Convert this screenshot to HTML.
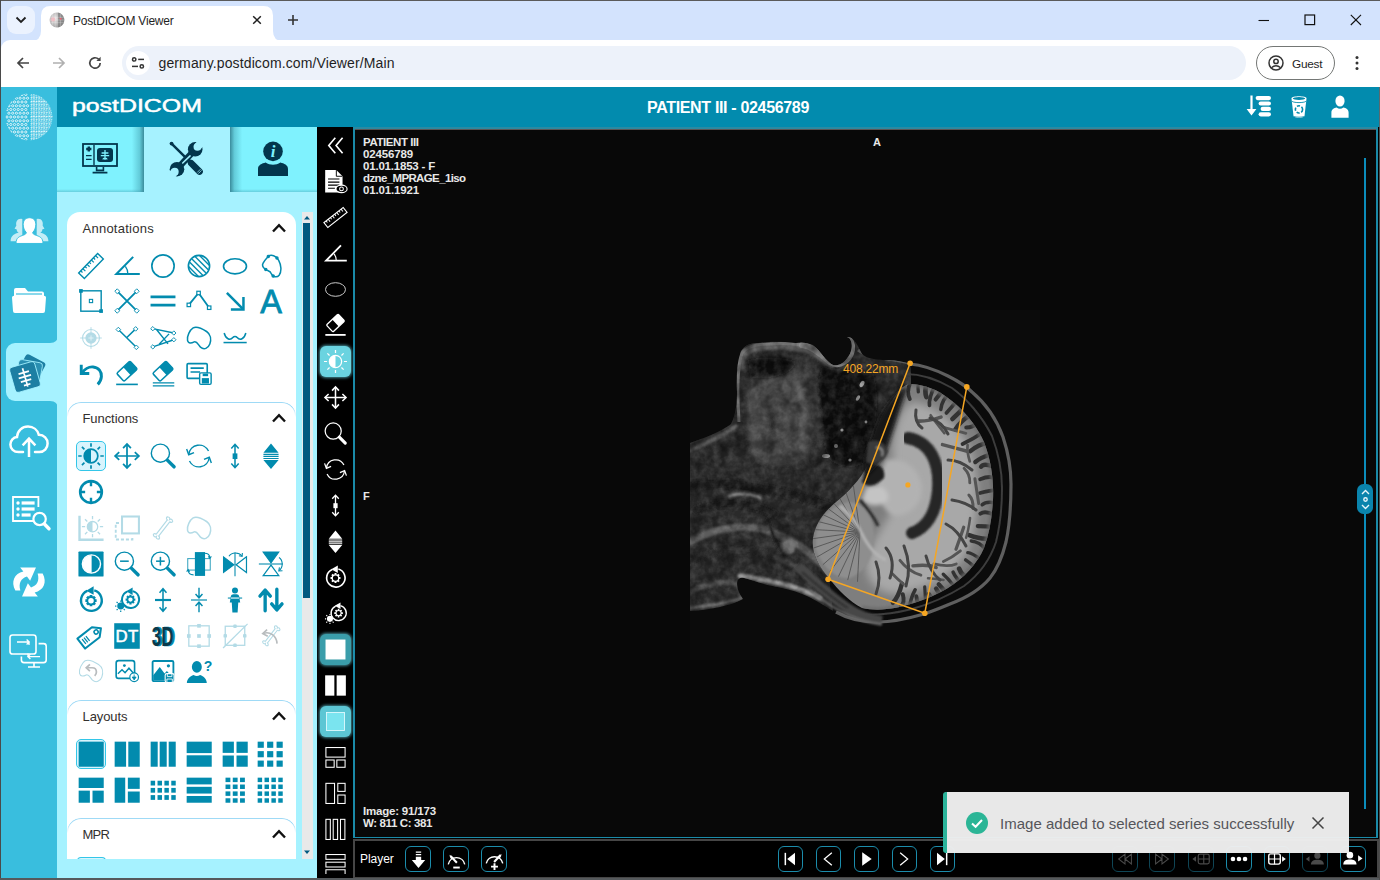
<!DOCTYPE html>
<html><head><meta charset="utf-8"><title>PostDICOM Viewer</title>
<style>
html,body{margin:0;padding:0}
body{width:1380px;height:880px;position:relative;overflow:hidden;background:#d3e3fd;font-family:"Liberation Sans",sans-serif}
body>div,body>svg{position:absolute;display:block}
.t{white-space:nowrap;line-height:1.2}
svg{overflow:visible}
</style></head><body>
<div style="left:0px;top:0px;width:1380px;height:40px;background:#d3e3fd"></div>
<div style="left:7px;top:6px;width:28px;height:28px;background:#ebf2fe;border-radius:9px"></div>
<svg style="left:15px;top:15px;" width="12" height="10" viewBox="0 0 12 10"><path d="M1.5 2.5 L6 7 L10.5 2.5" fill="none" stroke="#1f1f1f" stroke-width="1.8"/></svg>
<svg style="left:31px;top:5.5px;" width="254" height="35" viewBox="0 0 254 35"><path d="M0 35 Q10 35 10 25 L10 9.5 Q10 0 19.5 0 L232.5 0 Q242 0 242 9.5 L242 25 Q242 35 252 35 Z" fill="#fff"/></svg>
<svg style="left:49px;top:12px;" width="16" height="16" viewBox="0 0 18 18"><defs><radialGradient id="fg" cx="40%" cy="40%" r="65%"><stop offset="0" stop-color="#e6e2e2"/><stop offset="1" stop-color="#a4a4a4"/></radialGradient></defs><circle cx="9" cy="9" r="8.4" fill="url(#fg)"/><path d="M10 0.7 A8.4 8.4 0 0 1 10 17.3 Z" fill="#6a6a6a" opacity=".6"/><path d="M1 6 H17 M0.7 9 H17.3 M1 12 H17 M4 2 V16 M7 1 V17 M13 1.6 V16.4" stroke="#fff" stroke-width=".5" opacity=".5" fill="none"/><circle cx="4.6" cy="8.4" r="2.4" fill="#f6b4bc" opacity=".75"/><path d="M11.4 6.4 L14.6 7 L13.4 9.4 Z" fill="#f0566a" opacity=".9"/></svg>
<div class="t" style="left:73px;top:13.5px;font-size:12px;color:#1f1f1f;letter-spacing:-0.2px">PostDICOM Viewer</div>
<svg style="left:252px;top:15px;" width="10" height="10" viewBox="0 0 10 10"><path d="M1.2 1.2 L8.8 8.8 M8.8 1.2 L1.2 8.8" stroke="#1f1f1f" stroke-width="1.5" fill="none"/></svg>
<svg style="left:287px;top:14px;" width="12" height="12" viewBox="0 0 12 12"><path d="M6 1 V11 M1 6 H11" stroke="#333" stroke-width="1.6" fill="none"/></svg>
<svg style="left:1258px;top:14px;" width="12" height="12" viewBox="0 0 12 12"><path d="M0.5 6.5 H11" stroke="#111" stroke-width="1.1"/></svg>
<svg style="left:1304px;top:14px;" width="12" height="12" viewBox="0 0 12 12"><rect x="1" y="1" width="9.6" height="9.6" fill="none" stroke="#111" stroke-width="1.2"/></svg>
<svg style="left:1350px;top:14px;" width="12" height="12" viewBox="0 0 12 12"><path d="M0.8 0.8 L11 11 M11 0.8 L0.8 11" stroke="#111" stroke-width="1.1"/></svg>
<div style="left:1px;top:40px;width:1379px;height:47px;background:#fff;border-radius:9px 0 0 0"></div>
<svg style="left:15px;top:55px;" width="16" height="16" viewBox="0 0 16 16"><path d="M14 8 H3 M8 3 L3 8 L8 13" fill="none" stroke="#444" stroke-width="1.7"/></svg>
<svg style="left:51px;top:55px;" width="16" height="16" viewBox="0 0 16 16"><path d="M2 8 H13 M8 3 L13 8 L8 13" fill="none" stroke="#b0b0b0" stroke-width="1.7"/></svg>
<svg style="left:87px;top:55px;" width="16" height="16" viewBox="0 0 16 16"><path d="M13.2 8 A5.2 5.2 0 1 1 11.6 4.2" fill="none" stroke="#444" stroke-width="1.7"/><path d="M13.6 1.8 V6 H9.4 Z" fill="#444"/></svg>
<div style="left:122px;top:46px;width:1124px;height:34px;background:#edf2fa;border-radius:17px"></div>
<div style="left:126px;top:51px;width:24px;height:24px;background:#fff;border-radius:12px"></div>
<svg style="left:131px;top:56px;" width="14" height="14" viewBox="0 0 14 14"><g fill="none" stroke="#333" stroke-width="1.5"><circle cx="3.2" cy="3.4" r="1.7"/><path d="M7.2 3.4 H13"/><path d="M1 10.4 H7"/><circle cx="10.8" cy="10.4" r="1.7"/></g></svg>
<div class="t" style="left:158.5px;top:55px;font-size:14px;color:#1f1f1f;letter-spacing:0.12px">germany.postdicom.com/Viewer/Main</div>
<div style="left:1256px;top:46px;width:79px;height:34px;border:1px solid #747775;border-radius:17px;box-sizing:border-box"></div>
<svg style="left:1268px;top:55px;" width="16" height="16" viewBox="0 0 16 16"><g fill="none" stroke="#333" stroke-width="1.5"><circle cx="8" cy="8" r="7"/><circle cx="8" cy="6.4" r="2.2"/><path d="M3.4 12.8 Q8 8.6 12.6 12.8"/></g></svg>
<div class="t" style="left:1292px;top:56.5px;font-size:11.8px;color:#1f1f1f;letter-spacing:-0.25px">Guest</div>
<svg style="left:1354px;top:55px;" width="6" height="16" viewBox="0 0 6 16"><circle cx="3" cy="2.5" r="1.5" fill="#333"/><circle cx="3" cy="8" r="1.5" fill="#333"/><circle cx="3" cy="13.5" r="1.5" fill="#333"/></svg>
<div style="left:1px;top:87px;width:1379px;height:40px;background:#028bae"></div>
<div style="left:1px;top:87px;width:56px;height:792px;background:#39bede"></div>
<svg style="left:4px;top:90px;" width="50" height="52" viewBox="0 0 50 52"><defs><clipPath id="lgc"><circle cx="25" cy="27" r="23.5"/></clipPath></defs><g clip-path="url(#lgc)"><circle cx="3.0" cy="4.5" r="1.1" fill="none" stroke="#fff" stroke-width=".8"/><circle cx="6.8" cy="4.5" r="1.1" fill="none" stroke="#fff" stroke-width=".8"/><circle cx="10.5" cy="4.5" r="1.1" fill="none" stroke="#fff" stroke-width=".8"/><circle cx="14.2" cy="4.5" r="1.1" fill="none" stroke="#fff" stroke-width=".8"/><circle cx="18.0" cy="4.5" r="1.1" fill="none" stroke="#fff" stroke-width=".8"/><circle cx="21.8" cy="4.5" r="1.1" fill="none" stroke="#fff" stroke-width=".8"/><circle cx="4.9" cy="8.2" r="1.1" fill="none" stroke="#fff" stroke-width=".8"/><circle cx="8.7" cy="8.2" r="1.1" fill="none" stroke="#fff" stroke-width=".8"/><circle cx="12.4" cy="8.2" r="1.1" fill="none" stroke="#fff" stroke-width=".8"/><circle cx="16.1" cy="8.2" r="1.1" fill="none" stroke="#fff" stroke-width=".8"/><circle cx="19.9" cy="8.2" r="1.1" fill="none" stroke="#fff" stroke-width=".8"/><circle cx="23.6" cy="8.2" r="1.1" fill="none" stroke="#fff" stroke-width=".8"/><circle cx="3.0" cy="12.0" r="1.1" fill="none" stroke="#fff" stroke-width=".8"/><circle cx="6.8" cy="12.0" r="1.1" fill="none" stroke="#fff" stroke-width=".8"/><circle cx="10.5" cy="12.0" r="1.1" fill="none" stroke="#fff" stroke-width=".8"/><circle cx="14.2" cy="12.0" r="1.1" fill="none" stroke="#fff" stroke-width=".8"/><circle cx="18.0" cy="12.0" r="1.1" fill="none" stroke="#fff" stroke-width=".8"/><circle cx="21.8" cy="12.0" r="1.1" fill="none" stroke="#fff" stroke-width=".8"/><circle cx="4.9" cy="15.8" r="1.1" fill="none" stroke="#fff" stroke-width=".8"/><circle cx="8.7" cy="15.8" r="1.1" fill="none" stroke="#fff" stroke-width=".8"/><circle cx="12.4" cy="15.8" r="1.1" fill="none" stroke="#fff" stroke-width=".8"/><circle cx="16.1" cy="15.8" r="1.1" fill="none" stroke="#fff" stroke-width=".8"/><circle cx="19.9" cy="15.8" r="1.1" fill="none" stroke="#fff" stroke-width=".8"/><circle cx="23.6" cy="15.8" r="1.1" fill="none" stroke="#fff" stroke-width=".8"/><circle cx="3.0" cy="19.5" r="1.1" fill="none" stroke="#fff" stroke-width=".8"/><circle cx="6.8" cy="19.5" r="1.1" fill="none" stroke="#fff" stroke-width=".8"/><circle cx="10.5" cy="19.5" r="1.1" fill="none" stroke="#fff" stroke-width=".8"/><circle cx="14.2" cy="19.5" r="1.1" fill="none" stroke="#fff" stroke-width=".8"/><circle cx="18.0" cy="19.5" r="1.1" fill="none" stroke="#fff" stroke-width=".8"/><circle cx="21.8" cy="19.5" r="1.1" fill="none" stroke="#fff" stroke-width=".8"/><circle cx="4.9" cy="23.2" r="1.1" fill="none" stroke="#fff" stroke-width=".8"/><circle cx="8.7" cy="23.2" r="1.1" fill="none" stroke="#fff" stroke-width=".8"/><circle cx="12.4" cy="23.2" r="1.1" fill="none" stroke="#fff" stroke-width=".8"/><circle cx="16.1" cy="23.2" r="1.1" fill="none" stroke="#fff" stroke-width=".8"/><circle cx="19.9" cy="23.2" r="1.1" fill="none" stroke="#fff" stroke-width=".8"/><circle cx="23.6" cy="23.2" r="1.1" fill="none" stroke="#fff" stroke-width=".8"/><circle cx="3.0" cy="27.0" r="1.1" fill="none" stroke="#fff" stroke-width=".8"/><circle cx="6.8" cy="27.0" r="1.1" fill="none" stroke="#fff" stroke-width=".8"/><circle cx="10.5" cy="27.0" r="1.1" fill="none" stroke="#fff" stroke-width=".8"/><circle cx="14.2" cy="27.0" r="1.1" fill="none" stroke="#fff" stroke-width=".8"/><circle cx="18.0" cy="27.0" r="1.1" fill="none" stroke="#fff" stroke-width=".8"/><circle cx="21.8" cy="27.0" r="1.1" fill="none" stroke="#fff" stroke-width=".8"/><circle cx="4.9" cy="30.8" r="1.1" fill="none" stroke="#fff" stroke-width=".8"/><circle cx="8.7" cy="30.8" r="1.1" fill="none" stroke="#fff" stroke-width=".8"/><circle cx="12.4" cy="30.8" r="1.1" fill="none" stroke="#fff" stroke-width=".8"/><circle cx="16.1" cy="30.8" r="1.1" fill="none" stroke="#fff" stroke-width=".8"/><circle cx="19.9" cy="30.8" r="1.1" fill="none" stroke="#fff" stroke-width=".8"/><circle cx="23.6" cy="30.8" r="1.1" fill="none" stroke="#fff" stroke-width=".8"/><circle cx="3.0" cy="34.5" r="1.1" fill="none" stroke="#fff" stroke-width=".8"/><circle cx="6.8" cy="34.5" r="1.1" fill="none" stroke="#fff" stroke-width=".8"/><circle cx="10.5" cy="34.5" r="1.1" fill="none" stroke="#fff" stroke-width=".8"/><circle cx="14.2" cy="34.5" r="1.1" fill="none" stroke="#fff" stroke-width=".8"/><circle cx="18.0" cy="34.5" r="1.1" fill="none" stroke="#fff" stroke-width=".8"/><circle cx="21.8" cy="34.5" r="1.1" fill="none" stroke="#fff" stroke-width=".8"/><circle cx="4.9" cy="38.2" r="1.1" fill="none" stroke="#fff" stroke-width=".8"/><circle cx="8.7" cy="38.2" r="1.1" fill="none" stroke="#fff" stroke-width=".8"/><circle cx="12.4" cy="38.2" r="1.1" fill="none" stroke="#fff" stroke-width=".8"/><circle cx="16.1" cy="38.2" r="1.1" fill="none" stroke="#fff" stroke-width=".8"/><circle cx="19.9" cy="38.2" r="1.1" fill="none" stroke="#fff" stroke-width=".8"/><circle cx="23.6" cy="38.2" r="1.1" fill="none" stroke="#fff" stroke-width=".8"/><circle cx="3.0" cy="42.0" r="1.1" fill="none" stroke="#fff" stroke-width=".8"/><circle cx="6.8" cy="42.0" r="1.1" fill="none" stroke="#fff" stroke-width=".8"/><circle cx="10.5" cy="42.0" r="1.1" fill="none" stroke="#fff" stroke-width=".8"/><circle cx="14.2" cy="42.0" r="1.1" fill="none" stroke="#fff" stroke-width=".8"/><circle cx="18.0" cy="42.0" r="1.1" fill="none" stroke="#fff" stroke-width=".8"/><circle cx="21.8" cy="42.0" r="1.1" fill="none" stroke="#fff" stroke-width=".8"/><circle cx="4.9" cy="45.8" r="1.1" fill="none" stroke="#fff" stroke-width=".8"/><circle cx="8.7" cy="45.8" r="1.1" fill="none" stroke="#fff" stroke-width=".8"/><circle cx="12.4" cy="45.8" r="1.1" fill="none" stroke="#fff" stroke-width=".8"/><circle cx="16.1" cy="45.8" r="1.1" fill="none" stroke="#fff" stroke-width=".8"/><circle cx="19.9" cy="45.8" r="1.1" fill="none" stroke="#fff" stroke-width=".8"/><circle cx="23.6" cy="45.8" r="1.1" fill="none" stroke="#fff" stroke-width=".8"/><circle cx="3.0" cy="49.5" r="1.1" fill="none" stroke="#fff" stroke-width=".8"/><circle cx="6.8" cy="49.5" r="1.1" fill="none" stroke="#fff" stroke-width=".8"/><circle cx="10.5" cy="49.5" r="1.1" fill="none" stroke="#fff" stroke-width=".8"/><circle cx="14.2" cy="49.5" r="1.1" fill="none" stroke="#fff" stroke-width=".8"/><circle cx="18.0" cy="49.5" r="1.1" fill="none" stroke="#fff" stroke-width=".8"/><circle cx="21.8" cy="49.5" r="1.1" fill="none" stroke="#fff" stroke-width=".8"/><circle cx="4.9" cy="53.2" r="1.1" fill="none" stroke="#fff" stroke-width=".8"/><circle cx="8.7" cy="53.2" r="1.1" fill="none" stroke="#fff" stroke-width=".8"/><circle cx="12.4" cy="53.2" r="1.1" fill="none" stroke="#fff" stroke-width=".8"/><circle cx="16.1" cy="53.2" r="1.1" fill="none" stroke="#fff" stroke-width=".8"/><circle cx="19.9" cy="53.2" r="1.1" fill="none" stroke="#fff" stroke-width=".8"/><circle cx="23.6" cy="53.2" r="1.1" fill="none" stroke="#fff" stroke-width=".8"/><text x="26" y="7.8" font-family="Liberation Mono, monospace" font-size="4.8" fill="#fff" textLength="23" lengthAdjust="spacingAndGlyphs">101010101</text><text x="26" y="11.5" font-family="Liberation Mono, monospace" font-size="4.8" fill="#fff" textLength="23" lengthAdjust="spacingAndGlyphs">101010101</text><text x="26" y="15.3" font-family="Liberation Mono, monospace" font-size="4.8" fill="#fff" textLength="23" lengthAdjust="spacingAndGlyphs">101010101</text><text x="26" y="19.1" font-family="Liberation Mono, monospace" font-size="4.8" fill="#fff" textLength="23" lengthAdjust="spacingAndGlyphs">101010101</text><text x="26" y="22.8" font-family="Liberation Mono, monospace" font-size="4.8" fill="#fff" textLength="23" lengthAdjust="spacingAndGlyphs">101010101</text><text x="26" y="26.6" font-family="Liberation Mono, monospace" font-size="4.8" fill="#fff" textLength="23" lengthAdjust="spacingAndGlyphs">101010101</text><text x="26" y="30.3" font-family="Liberation Mono, monospace" font-size="4.8" fill="#fff" textLength="23" lengthAdjust="spacingAndGlyphs">101010101</text><text x="26" y="34.1" font-family="Liberation Mono, monospace" font-size="4.8" fill="#fff" textLength="23" lengthAdjust="spacingAndGlyphs">101010101</text><text x="26" y="37.8" font-family="Liberation Mono, monospace" font-size="4.8" fill="#fff" textLength="23" lengthAdjust="spacingAndGlyphs">101010101</text><text x="26" y="41.6" font-family="Liberation Mono, monospace" font-size="4.8" fill="#fff" textLength="23" lengthAdjust="spacingAndGlyphs">101010101</text><text x="26" y="45.3" font-family="Liberation Mono, monospace" font-size="4.8" fill="#fff" textLength="23" lengthAdjust="spacingAndGlyphs">101010101</text><text x="26" y="49.1" font-family="Liberation Mono, monospace" font-size="4.8" fill="#fff" textLength="23" lengthAdjust="spacingAndGlyphs">101010101</text><text x="26" y="52.8" font-family="Liberation Mono, monospace" font-size="4.8" fill="#fff" textLength="23" lengthAdjust="spacingAndGlyphs">101010101</text></g></svg>
<svg style="left:70px;top:92px" width="136" height="28"><text x="1.9" y="19.8" font-family="Liberation Sans, sans-serif" font-size="18" fill="#fff" stroke="#fff" stroke-width=".45" textLength="130" lengthAdjust="spacingAndGlyphs">postDICOM</text></svg>
<div class="t" style="left:647px;top:98px;font-size:16px;font-weight:bold;color:#fff;letter-spacing:-0.33px">PATIENT III - 02456789</div>
<div style="left:57px;top:127px;width:260px;height:752px;background:#a6f2ff"></div>
<div style="left:57px;top:127px;width:87px;height:65px;background:linear-gradient(90deg,#7ff2fe 0,#7ff2fe 86%,#62cbd9 95%,#3a8c9c 100%)"></div>
<div style="left:57px;top:189px;width:87px;height:3px;background:linear-gradient(180deg,rgba(60,140,160,0),rgba(60,140,160,.35))"></div>
<div style="left:230px;top:127px;width:87px;height:65px;background:linear-gradient(270deg,#7ff2fe 0,#7ff2fe 86%,#62cbd9 95%,#3a8c9c 100%)"></div>
<div style="left:230px;top:189px;width:87px;height:3px;background:linear-gradient(180deg,rgba(60,140,160,0),rgba(60,140,160,.35))"></div>
<div style="left:67px;top:212px;width:229px;height:647px;background:#fff;border-radius:13px 13px 0 0"></div>
<div style="left:301.5px;top:212px;width:11px;height:647px;background:#e9e9e9"></div>
<div style="left:303.3px;top:223px;width:6.8px;height:374.5px;background:#005a80"></div>
<svg style="left:302px;top:213px;" width="10" height="10" viewBox="0 0 10 10"><path d="M2 6.5 L5 3 L8 6.5 Z" fill="#005a80"/></svg>
<svg style="left:302px;top:847px;" width="10" height="10" viewBox="0 0 10 10"><path d="M2 3.5 L5 7 L8 3.5 Z" fill="#005a80"/></svg>
<div style="left:67px;top:401.5px;width:229px;height:15px;border:1px solid #9fdaf6;border-bottom:none;border-radius:14px 14px 0 0;box-sizing:border-box;-webkit-mask-image:linear-gradient(#000 35%,transparent 100%);mask-image:linear-gradient(#000 35%,transparent 100%)"></div>
<div style="left:67px;top:699.5px;width:229px;height:15px;border:1px solid #9fdaf6;border-bottom:none;border-radius:14px 14px 0 0;box-sizing:border-box;-webkit-mask-image:linear-gradient(#000 35%,transparent 100%);mask-image:linear-gradient(#000 35%,transparent 100%)"></div>
<div style="left:67px;top:817.5px;width:229px;height:15px;border:1px solid #9fdaf6;border-bottom:none;border-radius:14px 14px 0 0;box-sizing:border-box;-webkit-mask-image:linear-gradient(#000 35%,transparent 100%);mask-image:linear-gradient(#000 35%,transparent 100%)"></div>
<div class="t" style="left:82.5px;top:220.8px;font-size:13px;color:#33302e;letter-spacing:0.25px">Annotations</div>
<svg style="left:271px;top:222px;" width="16" height="12" viewBox="0 0 16 12"><path d="M2 9.5 L8 3.2 L14 9.5" fill="none" stroke="#111" stroke-width="2.4"/></svg>
<div class="t" style="left:82.5px;top:410.8px;font-size:13px;color:#33302e;letter-spacing:-0.07px">Functions</div>
<svg style="left:271px;top:412px;" width="16" height="12" viewBox="0 0 16 12"><path d="M2 9.5 L8 3.2 L14 9.5" fill="none" stroke="#111" stroke-width="2.4"/></svg>
<div class="t" style="left:82.5px;top:708.8px;font-size:13px;color:#33302e;letter-spacing:-0.08px">Layouts</div>
<svg style="left:271px;top:710px;" width="16" height="12" viewBox="0 0 16 12"><path d="M2 9.5 L8 3.2 L14 9.5" fill="none" stroke="#111" stroke-width="2.4"/></svg>
<div class="t" style="left:82.5px;top:826.8px;font-size:13px;color:#33302e;letter-spacing:-0.73px">MPR</div>
<svg style="left:271px;top:828px;" width="16" height="12" viewBox="0 0 16 12"><path d="M2 9.5 L8 3.2 L14 9.5" fill="none" stroke="#111" stroke-width="2.4"/></svg>
<div style="left:317px;top:127px;width:36px;height:752px;background:#000"></div>
<div style="left:1376px;top:127px;width:4px;height:753px;background:#000"></div>
<div style="left:353px;top:127px;width:1024.5px;height:710.5px;background:#080808;border:2px solid #1a8aa8;border-top:2px solid #2b8aa2;border-bottom-width:1.5px;box-sizing:border-box"></div>
<div style="left:355px;top:129px;width:1020.5px;height:1px;background:#5a5656"></div>
<div style="left:353px;top:837.5px;width:1027px;height:42.5px;background:#000"></div>
<div style="left:353px;top:839px;width:1025.5px;height:40px;background:#000;border:2px solid #464646;box-sizing:border-box"></div>
<div style="left:1364px;top:158px;width:2px;height:651px;background:#0b8dbb"></div>
<div style="left:1357px;top:484px;width:16px;height:30px;background:#0a84ad;border-radius:6.5px"></div>
<svg style="left:1357.5px;top:484.5px;" width="15" height="29" viewBox="0 0 15 29"><g fill="none" stroke="#e8f6fb" stroke-width="1.4"><path d="M4 9 L7.5 5.6 L11 9"/><circle cx="7.5" cy="14.5" r="1.7"/><path d="M4 20 L7.5 23.4 L11 20"/></g></svg>
<svg style="left:690px;top:310px;overflow:hidden" width="350" height="350" viewBox="0 0 350 350">
<defs>
<filter id="b1" x="-10%" y="-10%" width="120%" height="120%"><feGaussianBlur stdDeviation="1"/></filter>
<filter id="b2" x="-10%" y="-10%" width="120%" height="120%"><feGaussianBlur stdDeviation="2.2"/></filter>
<filter id="b4" x="-20%" y="-20%" width="140%" height="140%"><feGaussianBlur stdDeviation="4"/></filter>
<filter id="b06" x="-10%" y="-10%" width="120%" height="120%"><feGaussianBlur stdDeviation="0.7"/></filter>
<filter id="tx" x="0" y="0" width="100%" height="100%"><feTurbulence type="fractalNoise" baseFrequency="0.13" numOctaves="3" seed="4" result="n"/>
<feColorMatrix in="n" type="matrix" values="0 0 0 0 1  0 0 0 0 1  0 0 0 0 1  1.6 0 0 0 -0.55" result="m"/><feComposite in="m" in2="SourceGraphic" operator="in"/></filter>
<filter id="txd" x="0" y="0" width="100%" height="100%"><feTurbulence type="fractalNoise" baseFrequency="0.07" numOctaves="3" seed="11" result="n"/>
<feColorMatrix in="n" type="matrix" values="0 0 0 0 0  0 0 0 0 0  0 0 0 0 0  0 2.2 0 0 -0.85" result="m"/><feComposite in="m" in2="SourceGraphic" operator="in"/></filter>
<clipPath id="brainclip"><path id="bp" d="M221 74 C236 75 248 80 258 88 C272 98 286 114 294 132 C301 150 304 170 303 190 C302 206 300 222 294 238 C287 254 274 268 258 278 C246 285 236 289 224 293 C208 298 190 302 172 298 C160 292 148 280 139 268 C128 256 121 242 123 228 C125 214 134 202 146 192 C158 182 170 170 177 156 C182 146 184 134 188 122 C192 108 200 92 208 82 C212 77 216 74 221 74 Z"/></clipPath>
<clipPath id="faceclip"><path d="M0 133 C14 128 30 122 41 114 C46 104 47 92 47 82 C46 66 47 52 51 41 C55 35 60 33 68 33 C80 31 94 32 106 33 C112 32 118 33 123 35 C130 40 136 52 143 55 C150 57 158 50 161 41 C163 34 161 28 157 27 C164 26 168 36 172 44 C176 48 186 50 196 50 C206 50 214 52 221 54 L221 74 C212 78 204 90 198 104 C192 118 188 134 184 146 C176 164 160 180 146 192 C134 202 125 214 123 228 C121 242 128 256 139 268 L143 301 C132 294 122 288 112 284 C102 280 92 278 82 276 C72 274 62 270 54 268 C46 266 44 276 53 289 C40 296 20 300 0 301 Z"/></clipPath>
</defs>
<rect width="350" height="350" fill="#0b0b0b"/>
<g clip-path="url(#faceclip)">
<rect width="350" height="350" fill="#2a2a2a"/>
<g filter="url(#b2)"><path d="M62 60 C80 50 104 48 116 60 C128 80 126 120 118 146 C104 160 76 158 64 146 C54 120 54 84 62 60 Z" fill="#474747"/><path d="M96 62 C112 70 118 100 112 140" stroke="#686868" stroke-width="3" fill="none"/><path d="M80 108 C84 104 88 108 84 122 C80 124 78 116 80 108 Z" fill="#222"/></g>
<g filter="url(#b1)" fill="none"><path d="M50 60 C50 44 56 38 68 37 C84 35 104 36 118 39 C130 43 136 52 145 57" stroke="#5c5c5c" stroke-width="8"/></g>
<g filter="url(#b2)"><path d="M132 56 C146 62 170 58 184 64 C190 90 186 120 178 150 C168 160 150 158 140 150 C130 130 126 100 128 72 Z" fill="#0d0d0d"/><path d="M58 50 C72 46 96 47 106 52 C102 66 78 70 60 68 Z" fill="#0c0c0c"/><path d="M118 60 C124 70 130 100 128 132" stroke="#6a6a6a" stroke-width="2.5" fill="none" stroke-dasharray="3 2"/></g>
<g filter="url(#b06)" fill="#9a9a9a"><ellipse cx="172" cy="74" rx="2" ry="3.4" transform="rotate(30 172 74)"/><ellipse cx="168" cy="88" rx="1.6" ry="3" transform="rotate(30 168 88)"/><circle cx="152" cy="120" r="1.6"/><circle cx="146" cy="136" r="2"/><ellipse cx="136" cy="146" rx="4" ry="2"/><circle cx="160" cy="150" r="1.6"/><circle cx="176" cy="112" r="1.4"/></g>
<g filter="url(#b06)" fill="none"><path d="M49 112 C48 92 46 62 52 43 C58 35 70 34 80 34 C92 33 104 34 112 35" stroke="#6e6e6e" stroke-width="3"/><path d="M112 35 C122 36 130 44 140 52 C150 58 160 50 162 40 C163 34 160 29 157 28" stroke="#7c7c7c" stroke-width="6" stroke-linecap="round"/><path d="M168 40 C176 46 190 48 204 50 C212 51 218 52 222 55" stroke="#5a5a5a" stroke-width="3"/></g>
<g filter="url(#b1)" fill="none" stroke-linecap="round"><path d="M0 140 C20 132 36 124 46 116" stroke="#5a5a5a" stroke-width="4"/><path d="M0 176 C30 170 60 176 90 182 C110 186 128 192 140 196" stroke="#1c1c1c" stroke-width="9"/><path d="M6 200 C30 190 60 192 84 204" stroke="#1e1e1e" stroke-width="8"/><path d="M0 232 C24 218 54 212 82 222 C104 230 124 244 138 262" stroke="#5c5c5c" stroke-width="7"/><path d="M0 252 C26 238 56 236 84 246 C106 254 126 268 140 282" stroke="#2a2a2a" stroke-width="6"/><path d="M50 266 C66 268 84 272 100 276 C112 280 122 284 130 288" stroke="#9a9a9a" stroke-width="5"/><path d="M86 248 C100 252 116 262 128 274" stroke="#484848" stroke-width="5"/><path d="M4 280 C20 272 40 270 50 276" stroke="#505050" stroke-width="5"/><path d="M0 298 C20 296 40 292 52 288" stroke="#6a6a6a" stroke-width="3"/><path d="M78 210 C84 226 86 238 96 244" stroke="#191919" stroke-width="4"/><path d="M92 232 C100 226 108 232 104 242 C98 248 90 242 92 232 Z" fill="#6a6a6a" stroke="none"/><path d="M40 186 C52 182 64 184 70 188" stroke="#8a8a8a" stroke-width="3"/></g>
<rect width="350" height="350" fill="#a0a0a0" filter="url(#tx)" opacity=".16"/>
<rect width="350" height="350" fill="#000" filter="url(#txd)" opacity=".45"/>
</g>
<g fill="none" filter="url(#b06)"><path d="M220 54 C232 55 246 60 258 66 C268 71 276 76 282 82 C294 92 306 108 313 127 C318 142 321 158 321 174 C321 194 320 214 316 232 C312 248 308 258 300 268 C290 280 276 288 260 294 C248 299 240 302 234 304 C220 308 204 312 188 312 C176 312 160 310 146 302" stroke="#5e5e5e" stroke-width="3.2"/><path d="M216 64 C232 64 248 70 262 78 C276 88 292 106 302 126 C308 142 312 160 312 178 C312 196 310 216 306 232 C300 250 290 264 274 276 C258 286 240 294 222 299 C206 303 186 306 170 304" stroke="#3c3c3c" stroke-width="2"/></g>
<g fill="none" filter="url(#b1)"><path d="M108 256 C122 270 140 286 156 297 C166 304 178 309 192 311" stroke="#474747" stroke-width="10"/><path d="M120 280 C132 290 146 300 160 306 C170 310 180 313 192 314" stroke="#6e6e6e" stroke-width="2"/><path d="M112 262 C126 274 142 288 158 298" stroke="#2a2a2a" stroke-width="2"/></g>
<g clip-path="url(#brainclip)">
<rect width="350" height="350" fill="#7e7e7e"/>
<g filter="url(#b4)"><path d="M224 92 C250 96 276 120 284 150 C290 180 288 220 276 244 C262 266 236 280 206 284 C190 284 176 272 176 254 C180 232 196 214 204 196 C206 174 200 150 204 126 C208 108 214 94 224 92 Z" fill="#a8a8a8"/></g>
<g filter="url(#b06)" stroke-linecap="round" fill="none">
<path d="M220.0 73.6 Q216.4 81.6 219.8 89.0" stroke="#333" stroke-width="3.8"/>
<path d="M228.3 73.0 Q227.7 74.0 228.3 81.9" stroke="#333" stroke-width="3.3"/>
<path d="M236.6 73.7 Q234.3 81.4 236.4 87.0" stroke="#333" stroke-width="4.7"/>
<path d="M244.8 75.7 Q238.6 88.4 239.5 95.3" stroke="#333" stroke-width="3.7"/>
<path d="M252.9 79.1 Q251.8 81.7 245.6 89.5" stroke="#333" stroke-width="4.1"/>
<path d="M260.6 83.6 Q252.2 88.0 250.8 99.5" stroke="#333" stroke-width="3.5"/>
<path d="M268.0 89.4 Q262.9 95.8 256.4 103.0" stroke="#333" stroke-width="3.7"/>
<path d="M274.9 96.3 Q269.2 102.9 262.4 109.0" stroke="#333" stroke-width="4.6"/>
<path d="M281.2 104.3 Q270.2 111.2 265.3 119.4" stroke="#333" stroke-width="4.4"/>
<path d="M286.9 113.2 Q283.0 117.5 276.3 117.5" stroke="#333" stroke-width="4.1"/>
<path d="M291.9 123.0 Q283.0 129.1 272.6 133.9" stroke="#333" stroke-width="3.9"/>
<path d="M296.2 133.5 Q289.5 133.9 280.2 141.2" stroke="#333" stroke-width="4.3"/>
<path d="M299.7 144.7 Q290.8 147.4 285.3 152.0" stroke="#333" stroke-width="4.3"/>
<path d="M302.3 156.3 Q293.6 153.0 291.1 156.7" stroke="#333" stroke-width="4.4"/>
<path d="M304.0 168.3 Q300.1 165.4 290.2 169.2" stroke="#333" stroke-width="3.9"/>
<path d="M304.9 180.4 Q300.5 180.0 290.2 183.0" stroke="#333" stroke-width="3.9"/>
<path d="M304.9 192.7 Q295.8 191.1 292.2 194.7" stroke="#333" stroke-width="3.6"/>
<path d="M303.9 204.9 Q295.3 200.2 290.4 203.6" stroke="#333" stroke-width="3.9"/>
<path d="M302.1 216.8 Q296.5 216.6 287.8 216.2" stroke="#333" stroke-width="4.2"/>
<path d="M299.4 228.4 Q291.5 229.7 279.2 225.1" stroke="#333" stroke-width="4.5"/>
<path d="M295.8 239.5 Q289.6 231.8 281.2 231.0" stroke="#333" stroke-width="3.3"/>
<path d="M291.5 249.9 Q281.1 242.3 277.8 242.6" stroke="#333" stroke-width="3.4"/>
<path d="M286.4 259.6 Q284.0 255.7 275.6 249.9" stroke="#333" stroke-width="3.4"/>
<path d="M280.6 268.5 Q271.9 266.4 269.2 258.7" stroke="#333" stroke-width="4.8"/>
<path d="M274.2 276.4 Q265.5 268.0 263.1 262.1" stroke="#333" stroke-width="3.6"/>
<path d="M267.3 283.2 Q263.9 273.9 253.3 264.2" stroke="#333" stroke-width="3.4"/>
<path d="M259.9 288.8 Q258.1 284.5 248.7 274.3" stroke="#333" stroke-width="4.3"/>
<path d="M252.1 293.3 Q251.3 286.2 246.1 278.5" stroke="#333" stroke-width="4.4"/>
<path d="M244.1 296.5 Q245.3 293.2 238.7 284.2" stroke="#333" stroke-width="4.5"/>
<path d="M235.8 298.4 Q235.4 286.5 234.7 276.9" stroke="#333" stroke-width="3.2"/>
<path d="M227.5 299.0 Q228.4 296.3 226.3 286.2" stroke="#333" stroke-width="3.9"/>
<path d="M219.2 298.3 Q221.1 286.8 225.1 279.9" stroke="#333" stroke-width="3.6"/>
<path d="M211.0 296.2 Q215.1 293.0 212.8 284.3" stroke="#333" stroke-width="4.0"/>
<path d="M202.9 292.8 Q208.7 286.5 211.9 273.7" stroke="#333" stroke-width="4.5"/>
<path d="M227.9 111.1 Q238.1 111.5 251.0 107.1" stroke="#555" stroke-width="3.6"/>
<path d="M240.6 105.2 Q244.9 111.2 254.4 123.2" stroke="#555" stroke-width="2.6"/>
<path d="M252.8 117.2 Q268.2 121.5 275.9 123.3" stroke="#555" stroke-width="2.8"/>
<path d="M252.5 134.6 Q266.1 138.2 277.3 141.3" stroke="#555" stroke-width="3.5"/>
<path d="M277.6 135.0 Q276.7 141.5 279.8 151.4" stroke="#555" stroke-width="2.7"/>
<path d="M274.1 158.3 Q280.3 164.4 279.8 172.8" stroke="#555" stroke-width="2.9"/>
<path d="M284.9 168.8 Q286.8 181.4 288.7 193.5" stroke="#555" stroke-width="3.0"/>
<path d="M278.9 185.1 Q283.4 189.2 283.1 198.5" stroke="#555" stroke-width="3.0"/>
<path d="M280.1 207.9 Q278.5 220.1 276.1 227.7" stroke="#555" stroke-width="2.5"/>
<path d="M273.7 217.3 Q269.9 228.8 266.0 239.3" stroke="#555" stroke-width="3.3"/>
<path d="M270.4 240.9 Q262.0 247.7 253.4 251.5" stroke="#555" stroke-width="2.9"/>
<path d="M266.3 253.9 Q258.1 257.4 243.9 253.9" stroke="#555" stroke-width="2.7"/>
<path d="M253.6 269.9 Q242.8 268.6 238.0 268.3" stroke="#555" stroke-width="2.5"/>
<path d="M246.2 257.5 Q237.7 254.0 222.9 255.9" stroke="#555" stroke-width="3.3"/>
<path d="M230.9 265.2 Q218.2 261.4 210.0 250.4" stroke="#555" stroke-width="2.9"/>
<path d="M213.5 274.1 Q207.1 268.8 201.8 263.3" stroke="#555" stroke-width="2.8"/>
<path d="M196 238 Q206 250 200 268" stroke="#444" stroke-width="3"/>
<path d="M214 236 Q222 256 216 276" stroke="#444" stroke-width="3"/>
<path d="M236 246 Q240 262 250 270" stroke="#444" stroke-width="3"/>
<path d="M256 214 Q268 220 276 236" stroke="#444" stroke-width="3"/>
<path d="M262 190 Q276 192 286 200" stroke="#444" stroke-width="3"/>
<path d="M258 150 Q270 150 282 160" stroke="#444" stroke-width="3"/>
<path d="M240 108 Q252 112 258 124" stroke="#444" stroke-width="3"/>
<path d="M226 100 Q224 112 232 118" stroke="#444" stroke-width="3"/>
<path d="M186 252 Q192 268 186 284" stroke="#444" stroke-width="3"/>
</g>
<path d="M221 74 C236 75 248 80 258 88 C272 98 286 114 294 132 C301 150 304 170 303 190 C302 206 300 222 294 238 C287 254 274 268 258 278 C246 285 236 289 224 293 C208 298 190 302 172 298" stroke="#6a6a6a" stroke-width="5" fill="none" filter="url(#b1)" opacity=".7"/>
<g filter="url(#b2)"><path d="M196 150 C212 146 230 158 232 178 C232 196 218 206 204 206 C192 200 186 186 188 170 Z" fill="#b2b2b2"/><path d="M176 178 C188 172 200 178 198 190 C190 198 178 196 172 190 Z" fill="#c4c4c4"/></g>
<path d="M218 128 C240 132 250 152 248 180 C246 204 236 218 222 223" stroke="#262626" stroke-width="12" fill="none" stroke-linecap="round" filter="url(#b1)"/>
<g filter="url(#b1)"><path d="M176 160 C186 150 196 156 194 168 C186 176 178 178 172 172 Z" fill="#1c1c1c"/><path d="M170 190 C178 200 184 206 188 216" stroke="#2a2a2a" stroke-width="3" fill="none"/></g>
<g filter="url(#b1)"><path d="M126 226 C128 208 142 196 158 192 C172 192 182 204 184 222 C186 244 176 262 160 268 C146 270 132 256 126 240 Z" fill="#8e8e8e"/></g>
<g stroke="#5a5a5a" stroke-width="1" fill="none" filter="url(#b06)">
<path d="M170 222 L167.5 271.8"/>
<path d="M170 222 L157.7 270.1"/>
<path d="M170 222 L148.4 266.6"/>
<path d="M170 222 L140.0 261.4"/>
<path d="M170 222 L132.8 254.8"/>
<path d="M170 222 L127.0 247.0"/>
<path d="M170 222 L122.8 238.3"/>
<path d="M170 222 L120.5 229.0"/>
<path d="M170 222 L120.1 219.4"/>
<path d="M170 222 L121.5 209.9"/>
<path d="M170 222 L124.9 200.9"/>
<path d="M170 222 L129.9 192.6"/>
<path d="M170 222 L136.5 185.4"/>
<path d="M170 222 L144.4 179.6"/>
<path d="M170 222 L153.4 175.3"/>
<path d="M170 222 L163.0 172.8"/>
</g>
<path d="M150 196 C162 206 168 214 172 224 C178 236 186 246 196 250" stroke="#b4b4b4" stroke-width="3" fill="none" filter="url(#b1)"/>
</g>
<g filter="url(#b2)"><path d="M196 96 C204 84 212 78 218 76 C212 92 206 112 200 130 C196 146 186 158 176 166 C170 158 176 140 182 126 C186 114 190 104 196 96 Z" fill="#151515"/></g>
<g filter="url(#b1)"><path d="M178 132 C186 128 196 132 198 142 C194 152 184 156 176 152 Z" fill="#3a3a3a"/><path d="M186 138 C190 136 194 140 192 146" stroke="#8a8a8a" stroke-width="2" fill="none"/></g>
<g stroke="#f5a623" stroke-width="1.5" fill="none"><path d="M220.1 53.2 L138.1 269.2 L234.8 303.2 L276.8 76.9"/></g>
<circle cx="220.1" cy="53.2" r="2.8" fill="#f5a623"/>
<circle cx="276.8" cy="76.9" r="2.8" fill="#f5a623"/>
<circle cx="138.1" cy="269.2" r="2.8" fill="#f5a623"/>
<circle cx="234.8" cy="303.2" r="2.8" fill="#f5a623"/>
<circle cx="217.9" cy="174.9" r="2.6" fill="#f5a623"/>
</svg>
<div class="t" style="left:363px;top:136.4px;font-size:11.5px;font-weight:bold;color:#e8e8e8;line-height:12px;letter-spacing:-0.2px;letter-spacing:-0.42px">PATIENT III</div>
<div class="t" style="left:363px;top:148.4px;font-size:11.5px;font-weight:bold;color:#e8e8e8;line-height:12px;letter-spacing:-0.2px;letter-spacing:-0.15px">02456789</div>
<div class="t" style="left:363px;top:160.4px;font-size:11.5px;font-weight:bold;color:#e8e8e8;line-height:12px;letter-spacing:-0.2px;letter-spacing:-0.2px">01.01.1853 - F</div>
<div class="t" style="left:363px;top:172.4px;font-size:11.5px;font-weight:bold;color:#e8e8e8;line-height:12px;letter-spacing:-0.2px;letter-spacing:-0.63px">dzne_MPRAGE_1iso</div>
<div class="t" style="left:363px;top:184.4px;font-size:11.5px;font-weight:bold;color:#e8e8e8;line-height:12px;letter-spacing:-0.2px;letter-spacing:-0.16px">01.01.1921</div>
<div class="t" style="left:873px;top:136px;font-size:11.5px;font-weight:bold;color:#e8e8e8;line-height:12px;letter-spacing:-0.2px;font-size:11px">A</div>
<div class="t" style="left:363px;top:490px;font-size:11.5px;font-weight:bold;color:#e8e8e8;line-height:12px;letter-spacing:-0.2px;font-size:11px">F</div>
<div class="t" style="left:363px;top:805px;font-size:11.5px;font-weight:bold;color:#e8e8e8;line-height:12px;letter-spacing:-0.2px">Image: 91/173</div>
<div class="t" style="left:363px;top:817px;font-size:11.5px;font-weight:bold;color:#e8e8e8;line-height:12px;letter-spacing:-0.2px;letter-spacing:-0.38px">W: 811 C: 381</div>
<div class="t" style="left:843px;top:362px;font-size:12px;color:#f5a623;letter-spacing:-0.2px">408.22mm</div>
<div class="t" style="left:360px;top:851.5px;font-size:12px;color:#fff;letter-spacing:-0.05px">Player</div>
<svg style="left:78.0px;top:253.0px" width="26" height="26" viewBox="0 0 24 24" fill="none" stroke="#028bae" stroke-width="1.2"><g transform="rotate(-46 12 12)"><rect x="-0.60" y="8.35" width="25.2" height="7.3" stroke-width="1.3"/><path d="M2.20 8.35 V10.55" stroke-width="1.10"/><path d="M5.00 8.35 V11.55" stroke-width="1.10"/><path d="M7.80 8.35 V10.55" stroke-width="1.10"/><path d="M10.60 8.35 V11.55" stroke-width="1.10"/><path d="M13.40 8.35 V10.55" stroke-width="1.10"/><path d="M16.20 8.35 V11.55" stroke-width="1.10"/><path d="M19.00 8.35 V10.55" stroke-width="1.10"/><path d="M21.80 8.35 V11.55" stroke-width="1.10"/></g></svg>
<svg style="left:114.0px;top:253.0px" width="26" height="26" viewBox="0 0 24 24" fill="none" stroke="#028bae" stroke-width="1.2"><path d="M23.8 19.4 H2.2 L17.7 3.6" stroke-width="1.9" stroke-linejoin="miter"/><path d="M10.5 12.4 C12 14.4 12.8 16.6 12.7 19" stroke-width="1.2"/></svg>
<svg style="left:150.0px;top:253.0px" width="26" height="26" viewBox="0 0 24 24" fill="none" stroke="#028bae" stroke-width="1.2"><circle cx="12" cy="12" r="10.3" stroke-width="1.5"/></svg>
<svg style="left:186.0px;top:253.0px" width="26" height="26" viewBox="0 0 24 24" fill="none" stroke="#028bae" stroke-width="1.2"><defs><clipPath id="hc"><circle cx="12" cy="12" r="9.6"/></clipPath></defs><circle cx="12" cy="12" r="9.8" stroke-width="1.5"/><g clip-path="url(#hc)" stroke-width="1.25"><path d="M-17.30 13.30 L10.70 41.30"/><path d="M-14.75 10.75 L13.25 38.75"/><path d="M-12.20 8.20 L15.80 36.20"/><path d="M-9.65 5.65 L18.35 33.65"/><path d="M-7.10 3.10 L20.90 31.10"/><path d="M-4.55 0.55 L23.45 28.55"/><path d="M-2.00 -2.00 L26.00 26.00"/><path d="M0.55 -4.55 L28.55 23.45"/><path d="M3.10 -7.10 L31.10 20.90"/><path d="M5.65 -9.65 L33.65 18.35"/><path d="M8.20 -12.20 L36.20 15.80"/><path d="M10.75 -14.75 L38.75 13.25"/><path d="M13.30 -17.30 L41.30 10.70"/></g></svg>
<svg style="left:222.0px;top:253.0px" width="26" height="26" viewBox="0 0 24 24" fill="none" stroke="#028bae" stroke-width="1.2"><ellipse cx="12" cy="12.3" rx="10.6" ry="7" stroke-width="1.5"/></svg>
<svg style="left:257.5px;top:253.0px" width="26" height="26" viewBox="0 0 24 24" fill="none" stroke="#028bae" stroke-width="1.2"><path d="M9.5 3.2 C12 1 17 2.5 19 6.5 C21.5 11 22 17 19.5 20.5 C17.5 23 13.5 22 12.5 19.5 C11.5 16.5 9.5 16.5 8 15.8 C5.2 14.5 3.4 12 4.6 9.6 C5.6 7.4 7.6 5.2 9.5 3.2 Z" stroke-width="1.4"/><circle cx="9.5" cy="3.2" r="1" fill="#028bae"/><circle cx="17.5" cy="4.6" r="1" fill="#028bae"/><circle cx="7.2" cy="15.2" r="1" fill="#028bae"/><circle cx="14" cy="21.3" r="1" fill="#028bae"/></svg>
<svg style="left:78.0px;top:288.3px" width="26" height="26" viewBox="0 0 24 24" fill="none" stroke="#028bae" stroke-width="1.2"><rect x="2.6" y="2.6" width="18.8" height="18.8" stroke-width="1.3"/><rect x="1" y="1" width="3.4" height="3.4" fill="#028bae" stroke="none"/><rect x="19.6" y="19.6" width="3.4" height="3.4" fill="#028bae" stroke="none"/><rect x="10.5" y="10.5" width="3" height="3" stroke-width="1"/></svg>
<svg style="left:114.0px;top:288.3px" width="26" height="26" viewBox="0 0 24 24" fill="none" stroke="#028bae" stroke-width="1.2"><path d="M3.6 3.6 L20.4 20.4 M20.4 3.6 L3.6 20.4" stroke-width="1.7"/><rect x="1.4" y="1.4" width="3.2" height="3.2" transform="rotate(45 3 3)" fill="#fff" stroke-width=".8"/><rect x="19.4" y="1.4" width="3.2" height="3.2" transform="rotate(45 21 3)" fill="#fff" stroke-width=".8"/><rect x="1.4" y="19.4" width="3.2" height="3.2" transform="rotate(45 3 21)" fill="#fff" stroke-width=".8"/><rect x="19.4" y="19.4" width="3.2" height="3.2" transform="rotate(45 21 21)" fill="#fff" stroke-width=".8"/></svg>
<svg style="left:150.0px;top:288.3px" width="26" height="26" viewBox="0 0 24 24" fill="none" stroke="#028bae" stroke-width="1.2"><path d="M0.5 8.2 H23.5 M0.5 15.8 H23.5" stroke-width="2.4"/></svg>
<svg style="left:186.0px;top:288.3px" width="26" height="26" viewBox="0 0 24 24" fill="none" stroke="#028bae" stroke-width="1.2"><path d="M2.6 15.6 L11.6 4.6 L21.4 18.2" stroke-width="1.7"/><rect x="1.0" y="14.0" width="3.2" height="3.2" fill="#fff" stroke-width="1.1"/><rect x="10.0" y="2.9999999999999996" width="3.2" height="3.2" fill="#fff" stroke-width="1.1"/><rect x="19.799999999999997" y="16.599999999999998" width="3.2" height="3.2" fill="#fff" stroke-width="1.1"/></svg>
<svg style="left:222.0px;top:288.3px" width="26" height="26" viewBox="0 0 24 24" fill="none" stroke="#028bae" stroke-width="1.2"><path d="M4.5 4.5 L19 19" stroke-width="2.3"/><path d="M19.8 8.2 V19.8 H8.2" stroke-width="2.3" stroke-linejoin="miter"/></svg>
<svg style="left:257.5px;top:288.3px" width="26" height="26" viewBox="0 0 24 24" fill="none" stroke="#028bae" stroke-width="1.2"><text x="12" y="23" text-anchor="middle" font-family="Liberation Sans, sans-serif" font-size="30" fill="#028bae" stroke="#028bae" stroke-width=".7">A</text></svg>
<svg style="left:78.0px;top:324.5px" width="26" height="26" viewBox="0 0 24 24" fill="none" stroke="#b3dbe6" stroke-width="1.2"><circle cx="12" cy="12" r="7.8" stroke-width="1"/><circle cx="12" cy="12" r="5.2" fill="#b3dbe6" stroke="none"/><path d="M12 2 V22 M2 12 H22" stroke-width=".9"/><path d="M12 9.6 V14.4 M9.6 12 H14.4" stroke="#e6f4f8" stroke-width=".8"/></svg>
<svg style="left:114.0px;top:324.5px" width="26" height="26" viewBox="0 0 24 24" fill="none" stroke="#028bae" stroke-width="1.2"><path d="M4 4.2 L20.6 20.6 M11.6 11.8 L20 3.6" stroke-width="1.4"/><rect x="2.5" y="2.7" width="3" height="3" transform="rotate(45 4 4.2)" fill="#fff" stroke-width=".8"/><rect x="19.1" y="19.1" width="3" height="3" transform="rotate(45 20.6 20.6)" fill="#fff" stroke-width=".8"/><rect x="18.5" y="2.1" width="3" height="3" transform="rotate(45 20 3.6)" fill="#fff" stroke-width=".8"/></svg>
<svg style="left:150.0px;top:324.5px" width="26" height="26" viewBox="0 0 24 24" fill="none" stroke="#028bae" stroke-width="1.2"><path d="M2.6 3.4 L22 7.4 M2.6 20.2 L22 13.6 M6 4.2 L16.6 17.4 M17.6 8.2 L8.4 17.8" stroke-width="1.3"/><rect x="1.2000000000000002" y="2.0" width="2.8" height="2.8" transform="rotate(45 2.6 3.4)" fill="#fff" stroke-width=".8"/><rect x="20.6" y="6.0" width="2.8" height="2.8" transform="rotate(45 22 7.4)" fill="#fff" stroke-width=".8"/><rect x="1.2000000000000002" y="18.8" width="2.8" height="2.8" transform="rotate(45 2.6 20.2)" fill="#fff" stroke-width=".8"/><rect x="20.6" y="12.2" width="2.8" height="2.8" transform="rotate(45 22 13.6)" fill="#fff" stroke-width=".8"/></svg>
<svg style="left:186.0px;top:324.5px" width="26" height="26" viewBox="0 0 24 24" fill="none" stroke="#028bae" stroke-width="1.2"><path d="M6.6 2.6 C10 0.8 15 3.4 19 6 C23 8.6 23.4 13.6 22 17.6 C20.6 21.4 16.6 23.4 13.4 20.4 C11.4 18.4 10 14.6 7.6 15.6 C5.2 16.8 2.2 17.6 1.4 14.2 C0.6 10.6 3.6 4.4 6.6 2.6 Z" stroke-width="1.4"/></svg>
<svg style="left:222.0px;top:324.5px" width="26" height="26" viewBox="0 0 24 24" fill="none" stroke="#028bae" stroke-width="1.2"><path d="M2 7.4 C3.4 13 7.4 14.6 10 11.6 C11.2 10.2 12.8 10.2 14 11.6 C16.6 14.6 20.6 13 22 7.4" stroke-width="1.4"/><path d="M1.4 16.2 H22.8" stroke-width="1.4"/></svg>
<svg style="left:78.0px;top:361.0px" width="26" height="26" viewBox="0 0 24 24" fill="none" stroke="#028bae" stroke-width="1.2"><path d="M3 3.4 V11.6 H10.4" stroke-width="2.7" stroke-linejoin="miter"/><path d="M3.6 11 C7 6.6 11 5.2 14 5.5 C19 6 22 10 21.6 14.4 C21.4 17.4 20 19.8 18.2 21.6" stroke-width="2.7"/></svg>
<svg style="left:114.0px;top:361.0px" width="26" height="26" viewBox="0 0 24 24" fill="none" stroke="#028bae" stroke-width="1.2"><g transform="rotate(-43 12 9.4)"><rect x="3.6" y="4.4" width="16.8" height="10" rx="1.2" fill="#fff" stroke-width="1.4"/><path d="M12 4.4 H19.2 Q20.4 4.4 20.4 5.6 V13.2 Q20.4 14.4 19.2 14.4 H12 Z" fill="#028bae" stroke="none"/></g><path d="M2 21.6 H22" stroke-width="1.5"/></svg>
<svg style="left:150.0px;top:361.0px" width="26" height="26" viewBox="0 0 24 24" fill="none" stroke="#028bae" stroke-width="1.2"><g transform="rotate(-43 12 9.4)"><rect x="3.6" y="4.4" width="16.8" height="10" rx="1.2" fill="#fff" stroke-width="1.4"/><path d="M12 4.4 H19.2 Q20.4 4.4 20.4 5.6 V13.2 Q20.4 14.4 19.2 14.4 H12 Z" fill="#028bae" stroke="none"/></g><path d="M2.6 20.2 H22.4 M2.6 23 H22.4" stroke-width="1.2"/></svg>
<svg style="left:186.0px;top:361.0px" width="26" height="26" viewBox="0 0 24 24" fill="none" stroke="#028bae" stroke-width="1.2"><rect x="1" y="2.4" width="18.6" height="13.6" rx="1" stroke-width="1.5"/><path d="M4.2 6.6 H16.4 M4.2 10.2 H13" stroke-width="1.5"/><rect x="12.6" y="11" width="10.6" height="10.6" rx="1.2" fill="#fff" stroke-width="1.3"/><rect x="14.6" y="15.8" width="6.6" height="5" fill="#028bae" stroke="none"/><rect x="15.4" y="11.6" width="5" height="2.4" fill="#028bae" stroke="none"/></svg>
<div style="left:76px;top:441px;width:30px;height:30px;background:#d8f4fd;border:1px solid #33c6e8;border-radius:5px;box-sizing:border-box"></div>
<svg style="left:78.0px;top:443.0px" width="26" height="26" viewBox="0 0 24 24" fill="none" stroke="#028bae" stroke-width="1.2"><circle cx="12" cy="12" r="6.3" stroke-width="1.6"/><path d="M12 5.7 A6.3 6.3 0 0 0 12 18.3 Z" fill="#028bae" stroke="none"/><path d="M20.60 12.00 L23.80 12.00 M18.08 18.08 L20.34 20.34 M12.00 20.60 L12.00 23.80 M5.92 18.08 L3.66 20.34 M3.40 12.00 L0.20 12.00 M5.92 5.92 L3.66 3.66 M12.00 3.40 L12.00 0.20 M18.08 5.92 L20.34 3.66 " stroke-width="1.6"/></svg>
<svg style="left:114.0px;top:443.0px" width="26" height="26" viewBox="0 0 24 24" fill="none" stroke="#028bae" stroke-width="1.2"><path d="M12 1.2 V22.8 M1.2 12 H22.8" stroke-width="1.6"/><path d="M8.4 4.8 L12 1 L15.6 4.8 M8.4 19.2 L12 23 L15.6 19.2 M4.8 8.4 L1 12 L4.8 15.6 M19.2 8.4 L23 12 L19.2 15.6" stroke-width="1.6"/></svg>
<svg style="left:150.0px;top:443.0px" width="26" height="26" viewBox="0 0 24 24" fill="none" stroke="#028bae" stroke-width="1.2"><circle cx="9.6" cy="9.4" r="8.4" stroke-width="1.3"/><path d="M16 15.8 L22.2 22" stroke-width="3.2" stroke-linecap="round"/></svg>
<svg style="left:186.0px;top:443.0px" width="26" height="26" viewBox="0 0 24 24" fill="none" stroke="#028bae" stroke-width="1.2"><path d="M2.6 10.4 A9.6 9.6 0 0 1 20.8 7.4 M21.4 13.6 A9.6 9.6 0 0 1 3.2 16.6" stroke-width="1.3"/><path d="M0.6 5.6 L2.5 10.8 L7.4 8.8 M23.4 18.4 L21.5 13.2 L16.6 15.2" stroke-width="1.3"/></svg>
<svg style="left:222.0px;top:443.0px" width="26" height="26" viewBox="0 0 24 24" fill="none" stroke="#028bae" stroke-width="1.2"><path d="M12 1.4 V22.6 M8.6 5 L12 1.2 L15.4 5 M8.6 19 L12 22.8 L15.4 19" stroke-width="1.4"/><rect x="9.8" y="9.6" width="4.4" height="5.2" fill="#028bae" stroke="none"/></svg>
<svg style="left:257.5px;top:443.0px" width="26" height="26" viewBox="0 0 24 24" fill="none" stroke="#028bae" stroke-width="1.2"><path d="M12 0.4 L19 9 H5 Z M12 24 L19 15.6 H5 Z" fill="#028bae" stroke="none"/><path d="M5 10.5 H19 M5 12.4 H19 M5 14.3 H19" stroke-width="1.1"/></svg>
<svg style="left:78.0px;top:479.0px" width="26" height="26" viewBox="0 0 24 24" fill="none" stroke="#028bae" stroke-width="1.2"><circle cx="12" cy="12" r="10" stroke-width="2.4"/><path d="M12 2 V6.6 M12 17.4 V22 M2 12 H6.6 M17.4 12 H22" stroke-width="2.2"/></svg>
<svg style="left:78.0px;top:514.5px" width="26" height="26" viewBox="0 0 24 24" fill="none" stroke="#b3dbe6" stroke-width="1.2"><path d="M1.4 0.6 V22.8 H23.6" stroke-width="2.2"/><circle cx="13.4" cy="10.8" r="4.8" stroke-width="1.2"/><path d="M13.4 6.000000000000001 A4.8 4.8 0 0 0 13.4 15.600000000000001 Z" fill="#b3dbe6" stroke="none"/><path d="M20.20 10.80 L23.20 10.80 M18.21 15.61 L20.33 17.73 M13.40 17.60 L13.40 20.60 M8.59 15.61 L6.47 17.73 M6.60 10.80 L3.60 10.80 M8.59 5.99 L6.47 3.87 M13.40 4.00 L13.40 1.00 M18.21 5.99 L20.33 3.87 " stroke-width="1.2"/></svg>
<svg style="left:114.0px;top:514.5px" width="26" height="26" viewBox="0 0 24 24" fill="none" stroke="#b3dbe6" stroke-width="1.2"><rect x="7.4" y="1.4" width="15.6" height="15.6" stroke-width="1.9"/><path d="M4.6 7.4 H1.6 V22.6 H17 V20" stroke-width="1.7" stroke-dasharray="2.8 1.8"/></svg>
<svg style="left:150.0px;top:514.5px" width="26" height="26" viewBox="0 0 24 24" fill="none" stroke="#b3dbe6" stroke-width="1.2"><g transform="rotate(-52 12 12)"><path d="M3.4 10.6 H20.6 M3.4 13.4 H20.6" stroke-width="1.1"/><path d="M3.6 10.6 C3.8 8.6 1.6 8 1 9.6 C0.4 11 1.4 11.8 2 12 C1.4 12.2 0.4 13 1 14.4 C1.6 16 3.8 15.4 3.6 13.4 M20.4 10.6 C20.2 8.6 22.4 8 23 9.6 C23.6 11 22.6 11.8 22 12 C22.6 12.2 23.6 13 23 14.4 C22.4 16 20.2 15.4 20.4 13.4" stroke-width="1.1"/></g></svg>
<svg style="left:186.0px;top:514.5px" width="26" height="26" viewBox="0 0 24 24" fill="none" stroke="#b3dbe6" stroke-width="1.2"><path d="M6.6 2.6 C10 0.8 15 3.4 19 6 C23 8.6 23.4 13.6 22 17.6 C20.6 21.4 16.6 23.4 13.4 20.4 C11.4 18.4 10 14.6 7.6 15.6 C5.2 16.8 2.2 17.6 1.4 14.2 C0.6 10.6 3.6 4.4 6.6 2.6 Z" stroke-width="1.4"/></svg>
<svg style="left:78.0px;top:551.0px" width="26" height="26" viewBox="0 0 24 24" fill="none" stroke="#028bae" stroke-width="1.2"><rect x="0.4" y="0.4" width="23.2" height="23.2" rx=".8" fill="#028bae" stroke="none"/><path d="M12.6 3.6 A8.4 8.4 0 0 0 12.6 20.4 Z" fill="#fff" stroke="none"/><circle cx="12.4" cy="12" r="8.4" stroke="#fff" stroke-width="1.3"/></svg>
<svg style="left:114.0px;top:551.0px" width="26" height="26" viewBox="0 0 24 24" fill="none" stroke="#028bae" stroke-width="1.2"><circle cx="9.6" cy="9.4" r="8.4" stroke-width="1.3"/><path d="M16 15.8 L22.2 22" stroke-width="3.2" stroke-linecap="round"/><path d="M5.6 9.4 H13.6" stroke-width="1.4"/></svg>
<svg style="left:150.0px;top:551.0px" width="26" height="26" viewBox="0 0 24 24" fill="none" stroke="#028bae" stroke-width="1.2"><circle cx="9.6" cy="9.4" r="8.4" stroke-width="1.3"/><path d="M16 15.8 L22.2 22" stroke-width="3.2" stroke-linecap="round"/><path d="M5.6 9.4 H13.6" stroke-width="1.4"/><path d="M9.6 5.4 V13.4" stroke-width="1.4"/></svg>
<svg style="left:186.0px;top:551.0px" width="26" height="26" viewBox="0 0 24 24" fill="none" stroke="#028bae" stroke-width="1.2"><rect x="1.6" y="7" width="20.8" height="10.6" stroke-width="1" opacity=".75"/><rect x="8.2" y="1" width="9.4" height="22" fill="#028bae" stroke="none"/><path d="M17 2 C20 2 22 3.6 22 6.4 M7 22 C4 22 2 20.4 2 17.6" stroke-width="1"/><path d="M20.6 5 L22 6.8 L23.4 5 M0.6 19 L2 17.2 L3.4 19" stroke-width="1"/></svg>
<svg style="left:222.0px;top:551.0px" width="26" height="26" viewBox="0 0 24 24" fill="none" stroke="#028bae" stroke-width="1.2"><path d="M1.4 5.4 L11 12.6 L1.4 19.8 Z" fill="#028bae" stroke-width="1"/><path d="M22.6 5.4 L13 12.6 L22.6 19.8 Z" stroke-width="1.1"/><path d="M12 1.4 V23.4" stroke-width="1"/><path d="M6.4 4.8 C9 1 15.4 0.8 18.4 4.6" stroke-width="1"/><path d="M18.8 1.8 L18.6 5 L15.6 4.4" stroke-width="1"/></svg>
<svg style="left:257.5px;top:551.0px" width="26" height="26" viewBox="0 0 24 24" fill="none" stroke="#028bae" stroke-width="1.2"><path d="M4.8 1 L12 11 L19.2 1 Z" fill="#028bae" stroke-width="1"/><path d="M4.8 22.8 L12 13 L19.2 22.8 Z" stroke-width="1.1"/><path d="M0.8 12 H23" stroke-width="1"/><path d="M19.4 6 C23.2 8.6 23.4 15 19.6 18" stroke-width="1"/><path d="M22.6 18.2 L19.2 18.4 L19.8 15.2" stroke-width="1"/></svg>
<svg style="left:78.0px;top:587.0px" width="26" height="26" viewBox="0 0 24 24" fill="none" stroke="#028bae" stroke-width="1.2"><path d="M8.6 3.6 A9.6 9.6 0 1 0 15 3.2" stroke-width="2.20"/><path d="M14.4 -0.6 L7.6 3.4 L14.4 7.2 Z" fill="#028bae" stroke="none"/><circle cx="12" cy="12.6" r="3.4" stroke-width="1.7"/><path d="M15.40 12.60 L17.20 12.60 M14.40 15.00 L15.68 16.28 M12.00 16.00 L12.00 17.80 M9.60 15.00 L8.32 16.28 M8.60 12.60 L6.80 12.60 M9.60 10.20 L8.32 8.92 M12.00 9.20 L12.00 7.40 M14.40 10.20 L15.68 8.92 " stroke-width="2.55"/></svg>
<svg style="left:114.0px;top:587.0px" width="26" height="26" viewBox="0 0 24 24" fill="none" stroke="#028bae" stroke-width="1.2"><path d="M12.2 4.2 A7.9 7.9 0 1 0 17.2 3.8" stroke-width="1.80"/><path d="M17.2 0.4 L11.2 4 L17.2 7.4 Z" fill="#028bae" stroke="none"/><circle cx="15.2" cy="11.6" r="2.7" stroke-width="1.4"/><path d="M17.90 11.60 L19.70 11.60 M17.11 13.51 L18.38 14.78 M15.20 14.30 L15.20 16.10 M13.29 13.51 L12.02 14.78 M12.50 11.60 L10.70 11.60 M13.29 9.69 L12.02 8.42 M15.20 8.90 L15.20 7.10 M17.11 9.69 L18.38 8.42 " stroke-width="2.10"/><circle cx="6.2" cy="17.6" r="3.2" fill="#028bae" stroke="none"/><path d="M6.2 12.4 V13.6 M6.2 21.6 V23 M1 17.6 H2.2 M2.4 13.8 L3.4 14.8 M2.4 21.4 L3.4 20.4 M10 21.4 L9 20.4" stroke-width="1.1"/></svg>
<svg style="left:150.0px;top:587.0px" width="26" height="26" viewBox="0 0 24 24" fill="none" stroke="#028bae" stroke-width="1.2"><path d="M4.6 12 H19.4" stroke-width="2"/><path d="M12 1.8 V22.2 M8.8 5.2 L12 1.6 L15.2 5.2 M8.8 18.8 L12 22.4 L15.2 18.8" stroke-width="1.4"/></svg>
<svg style="left:186.0px;top:587.0px" width="26" height="26" viewBox="0 0 24 24" fill="none" stroke="#028bae" stroke-width="1.2"><path d="M4.6 12 H19.4" stroke-width="1.1"/><path d="M12 0.6 V9.6 M12 14.4 V23.4 M8.8 6.4 L12 10 L15.2 6.4 M8.8 17.6 L12 14 L15.2 17.6" stroke-width="1.3"/></svg>
<svg style="left:222.0px;top:587.0px" width="26" height="26" viewBox="0 0 24 24" fill="none" stroke="#028bae" stroke-width="1.2"><circle cx="12" cy="3.2" r="2.8" fill="#028bae" stroke="none"/><path d="M8.2 8.4 Q8.6 6.6 10.4 6.6 H13.6 Q15.4 6.6 15.8 8.4 L16.8 14.4 H15 L14.4 23.6 H9.6 L9 14.4 H7.2 Z" fill="#028bae" stroke="none"/><path d="M5.4 10.2 H18.6" stroke="#028bae" stroke-width="1"/><path d="M8.2 10.2 H15.8" stroke="#fff" stroke-width="1"/></svg>
<svg style="left:257.5px;top:587.0px" width="26" height="26" viewBox="0 0 24 24" fill="none" stroke="#028bae" stroke-width="1.2"><path d="M6.6 22 V3.4 M1.8 8.4 L6.6 2.8 L11.4 8.4 M17.4 2 V20.6 M12.6 15.6 L17.4 21.2 L22.2 15.6" stroke-width="3.1" stroke-linejoin="round" stroke-linecap="round"/></svg>
<svg style="left:78.0px;top:622.5px" width="26" height="26" viewBox="0 0 24 24" fill="none" stroke="#028bae" stroke-width="1.2"><g transform="rotate(-38 12 12)"><path d="M0.6 6.2 H17.6 L23.6 12 L17.6 17.8 H0.6 Z" stroke-width="1.9" stroke-linejoin="round"/><circle cx="18" cy="12" r="1.9" stroke-width="1.4"/><path d="M3.8 9.2 V14.8 M6 9.2 V14.8 M8.2 9.2 V14.8" stroke-width="1.2"/></g></svg>
<svg style="left:114.0px;top:622.5px" width="26" height="26" viewBox="0 0 24 24" fill="none" stroke="#028bae" stroke-width="1.2"><rect x="0.2" y="0.2" width="23.6" height="23.6" fill="#028bae" stroke="none"/><text x="12" y="17.6" text-anchor="middle" font-family="Liberation Sans, sans-serif" font-size="15.5" fill="#fff" stroke="#fff" stroke-width=".5" letter-spacing="0.2">DT</text></svg>
<svg style="left:150.0px;top:622.5px" width="26" height="26" viewBox="0 0 24 24" fill="none" stroke="#028bae" stroke-width="1.2"><text x="13.2" y="21.6" text-anchor="middle" font-family="Liberation Sans, sans-serif" font-weight="bold" font-size="25" fill="#028bae" stroke="#028bae" stroke-width=".5" textLength="20.5" lengthAdjust="spacingAndGlyphs">3D</text><text x="11.6" y="21.6" text-anchor="middle" font-family="Liberation Sans, sans-serif" font-weight="bold" font-size="25" fill="#0b3a4a" stroke="none" textLength="20" lengthAdjust="spacingAndGlyphs">3D</text></svg>
<svg style="left:186.0px;top:622.5px" width="26" height="26" viewBox="0 0 24 24" fill="none" stroke="#b3dbe6" stroke-width="1.2"><rect x="2.6" y="2.6" width="18.8" height="18.8" stroke-width="1.2"/><rect x="10.3" y="0.9000000000000001" width="3.4" height="3.4" fill="#b3dbe6" stroke="none"/><rect x="10.3" y="19.7" width="3.4" height="3.4" fill="#b3dbe6" stroke="none"/><rect x="0.9000000000000001" y="10.3" width="3.4" height="3.4" fill="#b3dbe6" stroke="none"/><rect x="19.7" y="10.3" width="3.4" height="3.4" fill="#b3dbe6" stroke="none"/><rect x="10.3" y="10.3" width="3.4" height="3.4" fill="#b3dbe6" stroke="none"/></svg>
<svg style="left:222.0px;top:622.5px" width="26" height="26" viewBox="0 0 24 24" fill="none" stroke="#b3dbe6" stroke-width="1.2"><rect x="3" y="3" width="18" height="17.6" stroke-width="1.2"/><path d="M1 23 L23.6 0.8" stroke-width="1.2"/><rect x="10.4" y="1.4" width="3.2" height="3.2" rx=".8" fill="#b3dbe6" stroke="none"/><rect x="10.4" y="19.0" width="3.2" height="3.2" rx=".8" fill="#b3dbe6" stroke="none"/><rect x="1.4" y="10.200000000000001" width="3.2" height="3.2" rx=".8" fill="#b3dbe6" stroke="none"/><rect x="19.4" y="10.200000000000001" width="3.2" height="3.2" rx=".8" fill="#b3dbe6" stroke="none"/></svg>
<svg style="left:257.5px;top:622.5px" width="26" height="26" viewBox="0 0 24 24" fill="none" stroke="#b3dbe6" stroke-width="1.2"><g transform="translate(1.5 1) scale(.9)"><g transform="rotate(-52 12 12)"><path d="M3.4 10.6 H20.6 M3.4 13.4 H20.6" stroke-width="1.1"/><path d="M3.6 10.6 C3.8 8.6 1.6 8 1 9.6 C0.4 11 1.4 11.8 2 12 C1.4 12.2 0.4 13 1 14.4 C1.6 16 3.8 15.4 3.6 13.4 M20.4 10.6 C20.2 8.6 22.4 8 23 9.6 C23.6 11 22.6 11.8 22 12 C22.6 12.2 23.6 13 23 14.4 C22.4 16 20.2 15.4 20.4 13.4" stroke-width="1.1"/></g></g><path d="M5 9.6 C11 7.6 17 11.6 17.6 19" stroke="#b8bcbe" stroke-width="1.5"/><path d="M8.4 6.2 L4.4 9.8 L9 12.2" stroke="#b8bcbe" stroke-width="1.5"/></svg>
<svg style="left:78.0px;top:658.0px" width="26" height="26" viewBox="0 0 24 24" fill="none" stroke="#b3dbe6" stroke-width="1.2"><path d="M6.6 2.6 C10 0.8 15 3.4 19 6 C23 8.6 23.4 13.6 22 17.6 C20.6 21.4 16.6 23.4 13.4 20.4 C11.4 18.4 10 14.6 7.6 15.6 C5.2 16.8 2.2 17.6 1.4 14.2 C0.6 10.6 3.6 4.4 6.6 2.6 Z" stroke-width="1"/><path d="M8.6 9 H13 C15.8 9 17 11 17 13 C17 14.6 16.2 15.8 15.4 16.6" stroke="#b8bcbe" stroke-width="1.6"/><path d="M11 5.8 L7.6 9 L11 12.2" stroke="#b8bcbe" stroke-width="1.6"/></svg>
<svg style="left:114.0px;top:658.0px" width="26" height="26" viewBox="0 0 24 24" fill="none" stroke="#028bae" stroke-width="1.2"><rect x="2" y="2.4" width="17" height="16.4" rx="2.2" stroke-width="1.5"/><circle cx="9.6" cy="7" r="1.3" fill="#028bae" stroke="none"/><path d="M3.6 14.6 L7.4 10.8 L10.2 13.6 L13.8 9.4 L18 14" stroke-width="1.3"/><circle cx="18.6" cy="17.8" r="4" fill="#fff" stroke-width="1.1"/><path d="M18.6 15.2 V18.4 M16.8 17.6 H20.4 L18.6 20.2 Z" fill="#028bae" stroke-width=".8"/></svg>
<svg style="left:150.0px;top:658.0px" width="26" height="26" viewBox="0 0 24 24" fill="none" stroke="#028bae" stroke-width="1.2"><rect x="2.4" y="2.8" width="19.2" height="18.6" rx="1.2" stroke-width="1.7"/><circle cx="17" cy="7.2" r="1.5" fill="#028bae" stroke="none"/><path d="M3 20.6 V16 L9 8.4 L13.4 14.4 L15.6 12 L21 18 V20.6 Z" fill="#028bae" stroke="none"/><rect x="14" y="14.4" width="8.2" height="8.2" rx="1.6" fill="#028bae" stroke="#fff" stroke-width="1"/><path d="M16 14.8 V17.2 H20.2 V14.8 M15.6 22.4 V19.4 H20.6 V22.4" stroke="#fff" stroke-width=".8"/></svg>
<svg style="left:186.0px;top:658.0px" width="26" height="26" viewBox="0 0 24 24" fill="none" stroke="#028bae" stroke-width="1.2"><ellipse cx="10" cy="8.2" rx="4.6" ry="5.4" fill="#028bae" stroke="none"/><path d="M0.8 23 C1 19 3.6 17 7 15.6 C9 16.8 11 16.8 13 15.6 C16.4 17 19 19 19.2 23 Z" fill="#028bae" stroke="none"/><text x="20.4" y="11.6" text-anchor="middle" font-family="Liberation Sans, sans-serif" font-weight="bold" font-size="13" fill="#028bae" stroke="none">?</text></svg>
<div style="left:76px;top:739px;width:30px;height:30px;background:#d8f4fd;border:1px solid #33c6e8;border-radius:5px;box-sizing:border-box"></div>
<svg style="left:77.8px;top:740.5999999999999px" width="26.4" height="26.4" viewBox="0 0 24 24" fill="none" stroke="#028bae" stroke-width="1.2"><rect x="0.60" y="0.60" width="22.80" height="22.80" fill="#028bae" stroke="none"/></svg>
<svg style="left:113.8px;top:740.5999999999999px" width="26.4" height="26.4" viewBox="0 0 24 24" fill="none" stroke="#028bae" stroke-width="1.2"><rect x="0.60" y="0.60" width="10.40" height="22.80" fill="#028bae" stroke="none"/><rect x="13.00" y="0.60" width="10.40" height="22.80" fill="#028bae" stroke="none"/></svg>
<svg style="left:149.8px;top:740.5999999999999px" width="26.4" height="26.4" viewBox="0 0 24 24" fill="none" stroke="#028bae" stroke-width="1.2"><rect x="0.60" y="0.60" width="6.40" height="22.80" fill="#028bae" stroke="none"/><rect x="8.80" y="0.60" width="6.40" height="22.80" fill="#028bae" stroke="none"/><rect x="17.00" y="0.60" width="6.40" height="22.80" fill="#028bae" stroke="none"/></svg>
<svg style="left:185.8px;top:740.5999999999999px" width="26.4" height="26.4" viewBox="0 0 24 24" fill="none" stroke="#028bae" stroke-width="1.2"><rect x="0.60" y="0.60" width="22.80" height="10.40" fill="#028bae" stroke="none"/><rect x="0.60" y="13.00" width="22.80" height="10.40" fill="#028bae" stroke="none"/></svg>
<svg style="left:221.8px;top:740.5999999999999px" width="26.4" height="26.4" viewBox="0 0 24 24" fill="none" stroke="#028bae" stroke-width="1.2"><rect x="0.60" y="0.60" width="10.20" height="10.20" fill="#028bae" stroke="none"/><rect x="13.20" y="0.60" width="10.20" height="10.20" fill="#028bae" stroke="none"/><rect x="0.60" y="13.20" width="10.20" height="10.20" fill="#028bae" stroke="none"/><rect x="13.20" y="13.20" width="10.20" height="10.20" fill="#028bae" stroke="none"/></svg>
<svg style="left:257.3px;top:740.5999999999999px" width="26.4" height="26.4" viewBox="0 0 24 24" fill="none" stroke="#028bae" stroke-width="1.2"><rect x="0.60" y="0.60" width="5.60" height="5.60" fill="#028bae" stroke="none"/><rect x="9.20" y="0.60" width="5.60" height="5.60" fill="#028bae" stroke="none"/><rect x="17.80" y="0.60" width="5.60" height="5.60" fill="#028bae" stroke="none"/><rect x="0.60" y="9.20" width="5.60" height="5.60" fill="#028bae" stroke="none"/><rect x="9.20" y="9.20" width="5.60" height="5.60" fill="#028bae" stroke="none"/><rect x="17.80" y="9.20" width="5.60" height="5.60" fill="#028bae" stroke="none"/><rect x="0.60" y="17.80" width="5.60" height="5.60" fill="#028bae" stroke="none"/><rect x="9.20" y="17.80" width="5.60" height="5.60" fill="#028bae" stroke="none"/><rect x="17.80" y="17.80" width="5.60" height="5.60" fill="#028bae" stroke="none"/></svg>
<svg style="left:77.8px;top:776.5999999999999px" width="26.4" height="26.4" viewBox="0 0 24 24" fill="none" stroke="#028bae" stroke-width="1.2"><rect x="0.60" y="0.60" width="22.80" height="9.40" fill="#028bae" stroke="none"/><rect x="0.60" y="12.40" width="10.20" height="11.00" fill="#028bae" stroke="none"/><rect x="13.20" y="12.40" width="10.20" height="11.00" fill="#028bae" stroke="none"/></svg>
<svg style="left:113.8px;top:776.5999999999999px" width="26.4" height="26.4" viewBox="0 0 24 24" fill="none" stroke="#028bae" stroke-width="1.2"><rect x="0.60" y="0.60" width="9.60" height="22.80" fill="#028bae" stroke="none"/><rect x="12.60" y="0.60" width="10.80" height="10.20" fill="#028bae" stroke="none"/><rect x="12.60" y="13.20" width="10.80" height="10.20" fill="#028bae" stroke="none"/></svg>
<svg style="left:149.8px;top:776.5999999999999px" width="26.4" height="26.4" viewBox="0 0 24 24" fill="none" stroke="#028bae" stroke-width="1.2"><rect x="0.60" y="3.40" width="4.05" height="4.33" fill="#028bae" stroke="none"/><rect x="6.85" y="3.40" width="4.05" height="4.33" fill="#028bae" stroke="none"/><rect x="13.10" y="3.40" width="4.05" height="4.33" fill="#028bae" stroke="none"/><rect x="19.35" y="3.40" width="4.05" height="4.33" fill="#028bae" stroke="none"/><rect x="0.60" y="9.93" width="4.05" height="4.33" fill="#028bae" stroke="none"/><rect x="6.85" y="9.93" width="4.05" height="4.33" fill="#028bae" stroke="none"/><rect x="13.10" y="9.93" width="4.05" height="4.33" fill="#028bae" stroke="none"/><rect x="19.35" y="9.93" width="4.05" height="4.33" fill="#028bae" stroke="none"/><rect x="0.60" y="16.47" width="4.05" height="4.33" fill="#028bae" stroke="none"/><rect x="6.85" y="16.47" width="4.05" height="4.33" fill="#028bae" stroke="none"/><rect x="13.10" y="16.47" width="4.05" height="4.33" fill="#028bae" stroke="none"/><rect x="19.35" y="16.47" width="4.05" height="4.33" fill="#028bae" stroke="none"/></svg>
<svg style="left:185.8px;top:776.5999999999999px" width="26.4" height="26.4" viewBox="0 0 24 24" fill="none" stroke="#028bae" stroke-width="1.2"><rect x="0.60" y="0.60" width="22.80" height="6.13" fill="#028bae" stroke="none"/><rect x="0.60" y="8.93" width="22.80" height="6.13" fill="#028bae" stroke="none"/><rect x="0.60" y="17.27" width="22.80" height="6.13" fill="#028bae" stroke="none"/></svg>
<svg style="left:221.8px;top:776.5999999999999px" width="26.4" height="26.4" viewBox="0 0 24 24" fill="none" stroke="#028bae" stroke-width="1.2"><rect x="3.20" y="0.60" width="4.40" height="4.05" fill="#028bae" stroke="none"/><rect x="9.80" y="0.60" width="4.40" height="4.05" fill="#028bae" stroke="none"/><rect x="16.40" y="0.60" width="4.40" height="4.05" fill="#028bae" stroke="none"/><rect x="3.20" y="6.85" width="4.40" height="4.05" fill="#028bae" stroke="none"/><rect x="9.80" y="6.85" width="4.40" height="4.05" fill="#028bae" stroke="none"/><rect x="16.40" y="6.85" width="4.40" height="4.05" fill="#028bae" stroke="none"/><rect x="3.20" y="13.10" width="4.40" height="4.05" fill="#028bae" stroke="none"/><rect x="9.80" y="13.10" width="4.40" height="4.05" fill="#028bae" stroke="none"/><rect x="16.40" y="13.10" width="4.40" height="4.05" fill="#028bae" stroke="none"/><rect x="3.20" y="19.35" width="4.40" height="4.05" fill="#028bae" stroke="none"/><rect x="9.80" y="19.35" width="4.40" height="4.05" fill="#028bae" stroke="none"/><rect x="16.40" y="19.35" width="4.40" height="4.05" fill="#028bae" stroke="none"/></svg>
<svg style="left:257.3px;top:776.5999999999999px" width="26.4" height="26.4" viewBox="0 0 24 24" fill="none" stroke="#028bae" stroke-width="1.2"><rect x="0.60" y="0.60" width="4.05" height="4.05" fill="#028bae" stroke="none"/><rect x="6.85" y="0.60" width="4.05" height="4.05" fill="#028bae" stroke="none"/><rect x="13.10" y="0.60" width="4.05" height="4.05" fill="#028bae" stroke="none"/><rect x="19.35" y="0.60" width="4.05" height="4.05" fill="#028bae" stroke="none"/><rect x="0.60" y="6.85" width="4.05" height="4.05" fill="#028bae" stroke="none"/><rect x="6.85" y="6.85" width="4.05" height="4.05" fill="#028bae" stroke="none"/><rect x="13.10" y="6.85" width="4.05" height="4.05" fill="#028bae" stroke="none"/><rect x="19.35" y="6.85" width="4.05" height="4.05" fill="#028bae" stroke="none"/><rect x="0.60" y="13.10" width="4.05" height="4.05" fill="#028bae" stroke="none"/><rect x="6.85" y="13.10" width="4.05" height="4.05" fill="#028bae" stroke="none"/><rect x="13.10" y="13.10" width="4.05" height="4.05" fill="#028bae" stroke="none"/><rect x="19.35" y="13.10" width="4.05" height="4.05" fill="#028bae" stroke="none"/><rect x="0.60" y="19.35" width="4.05" height="4.05" fill="#028bae" stroke="none"/><rect x="6.85" y="19.35" width="4.05" height="4.05" fill="#028bae" stroke="none"/><rect x="13.10" y="19.35" width="4.05" height="4.05" fill="#028bae" stroke="none"/><rect x="19.35" y="19.35" width="4.05" height="4.05" fill="#028bae" stroke="none"/></svg>
<div style="left:76.5px;top:857px;width:29px;height:6px;border:1px solid #33c6e8;border-bottom:none;border-radius:4px 4px 0 0;box-sizing:border-box;background:#d8f4fd"></div>
<div style="left:57px;top:859px;width:260px;height:20px;background:#a6f2ff"></div>
<div style="left:6px;top:343px;width:54px;height:58px;background:#a6f2ff;border-radius:9px 0 0 9px"></div>
<svg style="left:50px;top:335px;" width="8" height="8" viewBox="0 0 8 8"><path d="M8 0 V8 H0 Q8 8 8 0 Z" fill="#a6f2ff"/></svg>
<svg style="left:50px;top:401px;" width="8" height="8" viewBox="0 0 8 8"><path d="M8 8 V0 H0 Q8 0 8 8 Z" fill="#a6f2ff"/></svg>
<svg style="left:8.5px;top:217px;" width="41" height="27" viewBox="0 0 44 30"><g fill="#c4edf6"><path d="M12.6 2 C8 2 6.6 6 7.4 9.4 L5.4 13 L7.6 13.6 C8 16 9 17 10 17.4 C6 18.4 1 20 1 27 H14 V2.2 Z"/><path d="M31.4 2 C36 2 37.4 6 36.6 9.4 L38.6 13 L36.4 13.6 C36 16 35 17 34 17.4 C38 18.4 43 20 43 27 H30 V2.2 Z"/></g><g fill="#fff" stroke="#39bede" stroke-width="1.1"><path d="M22 0.8 C17.4 0.8 15 4 15 8.4 C15 12 16.4 15.4 18.4 17 C18.4 18.6 17.6 19.2 15.6 20 C11 21.6 7 22.6 7 29.4 H37 C37 22.6 33 21.6 28.4 20 C26.4 19.2 25.6 18.6 25.6 17 C27.6 15.4 29 12 29 8.4 C29 4 26.6 0.8 22 0.8 Z"/></g></svg>
<svg style="left:11px;top:285.5px;" width="36" height="29" viewBox="0 0 36 29"><path d="M3 4 Q3 2 5 2 H14 L17 5.4 H31 Q33 5.4 33 7.4 V10 H3 Z" fill="#fff"/><path d="M5 8 H31" stroke="#39bede" stroke-width="1.2"/><path d="M1 11.6 Q1 9.8 3 9.8 H33 Q35 9.8 35 11.6 L34 25 Q34 27 32 27 H4 Q2 27 2 25 Z" fill="#fff"/></svg>
<svg style="left:9px;top:353px;" width="40" height="40" viewBox="0 0 40 40"><g transform="rotate(28 22 16)"><rect x="11" y="4" width="22" height="22" rx="3" fill="#1d7fa3"/></g><g transform="rotate(10 20 20)"><rect x="8" y="8" width="24" height="24" rx="3" fill="#2a8fb2" stroke="#a6f2ff" stroke-width=".8"/></g><g transform="rotate(-16 16 24)"><rect x="3" y="11" width="26" height="26" rx="3.4" fill="#1d7fa3" stroke="#a6f2ff" stroke-width=".8"/><path d="M16 15 V34 M10.6 19.4 H21.4 M9.6 23.6 H22.4 M10.6 27.8 H21.4 M12.6 32 H19.4" stroke="#fff" stroke-width="1.7" fill="none"/></g></svg>
<svg style="left:9px;top:422px;" width="40" height="38" viewBox="0 0 40 38"><path d="M14 30 H9.6 C4.6 30 1.4 26.6 1.4 22.4 C1.4 18.4 4.4 15.4 8 15 C8.4 8.6 13.4 4.6 19 4.6 C24.4 4.6 28.6 8 29.8 12.8 C35 12.8 38.6 16.6 38.6 21.4 C38.6 26.4 35 30 30.4 30 H26" fill="none" stroke="#fff" stroke-width="2.5" stroke-linecap="round"/><path d="M20 35 V17.4 M13.6 23.4 L20 16.6 L26.4 23.4" fill="none" stroke="#fff" stroke-width="2.5"/></svg>
<svg style="left:11px;top:495px;" width="40" height="36" viewBox="0 0 40 36"><path d="M24 26 H2 V2 H27.4 V12" fill="none" stroke="#fff" stroke-width="1.8"/><g fill="#fff"><circle cx="7" cy="8" r="1.7"/><circle cx="7" cy="14" r="1.7"/><circle cx="7" cy="20" r="1.7"/><rect x="10.6" y="6.4" width="13" height="3.2"/><rect x="10.6" y="12.4" width="13" height="3.2"/><rect x="10.6" y="18.4" width="9" height="3.2"/></g><circle cx="28.6" cy="24" r="6.2" fill="#39bede" stroke="#fff" stroke-width="2.2"/><path d="M33.4 29 L38 33.8" stroke="#fff" stroke-width="3.4" stroke-linecap="round"/></svg>
<svg style="left:11px;top:563px;" width="36" height="38" viewBox="0 0 36 38"><g fill="#fff" transform="rotate(-28 18 19)"><path d="M2 20 C2 10 9 4.6 18 7 L17 2 L31 9.4 L19.6 18.4 L18.8 13.2 C12.6 12 8 15 6.4 22.4 Z"/><path d="M34 18 C34 28 27 33.4 18 31 L19 36 L5 28.6 L16.4 19.6 L17.2 24.8 C23.4 26 28 23 29.6 15.6 Z"/></g></svg>
<svg style="left:9px;top:634px;" width="40" height="35" viewBox="0 0 40 35"><g fill="none" stroke="#fff" stroke-width="1.6"><rect x="1" y="1" width="26" height="19" rx="2.6"/><path d="M29.6 9.6 H34.6 Q37.2 9.6 37.2 12.2 V26 Q37.2 28.6 34.6 28.6 H15 Q12.4 28.6 12.4 26 V22.6"/><path d="M25 29 V32.6 M19 33 H31"/><path d="M8 8 H20 V11 M17.6 5.6 L20.2 8 L17.6 10.4" stroke-width="1.3"/><path d="M31 22.6 H19 V19.6 M21.4 25 L18.8 22.6 L21.4 20.2" stroke-width="1.3"/></g></svg>
<svg style="left:82px;top:143px;" width="36" height="32" viewBox="0 0 36 32"><rect x="1" y="1" width="34" height="22" fill="none" stroke="#03364d" stroke-width="1.8"/><path d="M12 2 V22" stroke="#03364d" stroke-width="1.4"/><path d="M4.2 6 H9.4 M6.8 3.6 V8.4" stroke="#03364d" stroke-width="2.4"/><path d="M4 12.6 H9.6 M4 16.4 H9.6" stroke="#03364d" stroke-width="1.1"/><rect x="15" y="5" width="16" height="14" rx="3" fill="#03364d"/><path d="M23 7 V17 M19.6 10 H26.4 M18.8 12.6 H27.2 M21 16.6 C21 14.6 25 14.6 25 16.6" stroke="#7ff2fe" stroke-width="1.3" fill="none"/><path d="M14.6 24 V27.4 H21.4 V24 M10.6 29.6 H25.4" stroke="#03364d" stroke-width="1.6" fill="none"/></svg>
<svg style="left:169px;top:141px;" width="36" height="36" viewBox="0 0 36 36"><circle cx="2.55" cy="2.55" r="1.9" fill="#03364d"/><path d="M2.55 2.55 L16.97 16.97" stroke="#03364d" stroke-width="2.5" stroke-linecap="round"/><path d="M17.68 17.68 L22.63 22.63" stroke="#03364d" stroke-width="4.2" stroke-linecap="round"/><path d="M22.27 22.27 L30.55 30.55" stroke="#03364d" stroke-width="6.6" stroke-linecap="round"/><path d="M28.21 31.47 L31.47 28.21" stroke="#a6f2ff" stroke-width=".7"/><path d="M29.34 32.60 L32.60 29.34" stroke="#a6f2ff" stroke-width=".7"/><path d="M8.0 28.2 L26.2 8.3" stroke="#03364d" stroke-width="6.4"/><circle cx="8.0" cy="28.2" r="7.3" fill="#03364d"/><circle cx="26.2" cy="8.3" r="7.3" fill="#03364d"/><circle cx="28.43" cy="5.86" r="3.9" fill="#a6f2ff"/><path d="M28.43 5.86 L33.62 0.18" stroke="#a6f2ff" stroke-width="7.8"/><circle cx="5.77" cy="30.64" r="3.9" fill="#a6f2ff"/><path d="M5.77 30.64 L0.58 36.32" stroke="#a6f2ff" stroke-width="7.8"/><path d="M13.7 22 L21.1 14.9" stroke="#a6f2ff" stroke-width="1.5" stroke-linecap="round"/></svg>
<svg style="left:257px;top:141px;" width="32" height="36" viewBox="0 0 32 36"><circle cx="16" cy="10.4" r="9.8" fill="#03364d"/><path d="M1 35 V28 C1 24 5 22.6 8.6 21.6 C13 24.6 19 24.6 23.4 21.6 C27 22.6 31 24 31 28 V35 Z" fill="#03364d"/><text x="16.2" y="16.4" text-anchor="middle" font-family="Liberation Serif, serif" font-weight="bold" font-style="italic" font-size="17" fill="#7ff2fe">i</text></svg>
<div style="left:319.5px;top:345.5px;width:31px;height:31px;background:#6ad3e0;border-radius:6px;box-shadow:0 0 3px 1px rgba(95,200,215,.7)"></div>
<div style="left:319.5px;top:633.5px;width:31px;height:31px;background:#3a9daa;border-radius:6px;box-shadow:0 0 3px 1px rgba(95,200,215,.7)"></div>
<div style="left:319.5px;top:705.5px;width:31px;height:31px;background:#5cc6d4;border-radius:6px;box-shadow:0 0 3px 1px rgba(95,200,215,.7)"></div>
<svg style="left:323.5px;top:133.5px" width="23" height="23" viewBox="0 0 24 24" fill="none" stroke="#fff" stroke-width="1.2"><path d="M11.8 4 L5 12 L11.8 20 M19.4 4 L12.6 12 L19.4 20" stroke-width="1.7"/></svg>
<svg style="left:323.5px;top:169.5px" width="23" height="23" viewBox="0 0 24 24" fill="none" stroke="#fff" stroke-width="1.2"><g transform="translate(-1.6 -0.8) scale(1.08)"><path d="M2.6 0.8 H13.4 L19.4 6.8 V22.4 H2.6 Z" fill="#fff" stroke="none"/><path d="M13.4 0.8 V6.8 H19.4" stroke="#000" stroke-width=".9"/><path d="M5.4 9.4 H16.4 M5.4 12.4 H16.4 M5.4 15.4 H16.4 M5.4 18.4 H12" stroke="#000" stroke-width="1.1"/><ellipse cx="18.4" cy="19" rx="5.4" ry="3.6" fill="#000" stroke="#fff" stroke-width="1.1"/><circle cx="18.4" cy="19" r="1.8" fill="#000" stroke="#fff" stroke-width="1"/></g></svg>
<svg style="left:323.5px;top:205.5px" width="23" height="23" viewBox="0 0 24 24" fill="none" stroke="#fff" stroke-width="1.2"><g transform="rotate(-38 12 12)"><rect x="-0.75" y="8.70" width="25.5" height="6.6" stroke-width="1.2"/><path d="M2.08 8.70 V10.90" stroke-width="1.02"/><path d="M4.92 8.70 V11.90" stroke-width="1.02"/><path d="M7.75 8.70 V10.90" stroke-width="1.02"/><path d="M10.58 8.70 V11.90" stroke-width="1.02"/><path d="M13.42 8.70 V10.90" stroke-width="1.02"/><path d="M16.25 8.70 V11.90" stroke-width="1.02"/><path d="M19.08 8.70 V10.90" stroke-width="1.02"/><path d="M21.92 8.70 V11.90" stroke-width="1.02"/></g></svg>
<svg style="left:323.5px;top:241.5px" width="23" height="23" viewBox="0 0 24 24" fill="none" stroke="#fff" stroke-width="1.2"><path d="M23.8 19.4 H2.2 L17.7 3.6" stroke-width="1.9" stroke-linejoin="miter"/><path d="M10.5 12.4 C12 14.4 12.8 16.6 12.7 19" stroke-width="1.2"/></svg>
<svg style="left:323.5px;top:277.5px" width="23" height="23" viewBox="0 0 24 24" fill="none" stroke="#fff" stroke-width="1.2"><ellipse cx="12" cy="12" rx="10.4" ry="7.1" stroke-width="1" stroke="#d4d4d4"/></svg>
<svg style="left:323.5px;top:313.5px" width="23" height="23" viewBox="0 0 24 24" fill="none" stroke="#fff" stroke-width="1.2"><g transform="rotate(-43 12 9.4)"><rect x="3.6" y="4.4" width="16.8" height="10" rx="1.2" fill="#000" stroke-width="1.4"/><path d="M12 4.4 H19.2 Q20.4 4.4 20.4 5.6 V13.2 Q20.4 14.4 19.2 14.4 H12 Z" fill="#fff" stroke="none"/></g><path d="M1.4 21.8 H22.6" stroke-width="1.9"/></svg>
<svg style="left:323.5px;top:349.5px" width="23" height="23" viewBox="0 0 24 24" fill="none" stroke="#fff" stroke-width="1.2"><circle cx="12" cy="12" r="6.4" stroke-width="1.3"/><path d="M12 5.6 A6.4 6.4 0 0 0 12 18.4 Z" fill="#fff" stroke="none"/><path d="M20.80 12.00 L24.00 12.00 M18.22 18.22 L20.49 20.49 M12.00 20.80 L12.00 24.00 M5.78 18.22 L3.51 20.49 M3.20 12.00 L0.00 12.00 M5.78 5.78 L3.51 3.51 M12.00 3.20 L12.00 0.00 M18.22 5.78 L20.49 3.51 " stroke-width="1.3"/></svg>
<svg style="left:323.5px;top:385.5px" width="23" height="23" viewBox="0 0 24 24" fill="none" stroke="#fff" stroke-width="1.2"><path d="M12 1.2 V22.8 M1.2 12 H22.8" stroke-width="1.6"/><path d="M8.4 4.8 L12 1 L15.6 4.8 M8.4 19.2 L12 23 L15.6 19.2 M4.8 8.4 L1 12 L4.8 15.6 M19.2 8.4 L23 12 L19.2 15.6" stroke-width="1.6"/></svg>
<svg style="left:323.5px;top:421.5px" width="23" height="23" viewBox="0 0 24 24" fill="none" stroke="#fff" stroke-width="1.2"><circle cx="9.6" cy="9.4" r="8.4" stroke-width="1.3"/><path d="M16 15.8 L22.2 22" stroke-width="3.2" stroke-linecap="round"/></svg>
<svg style="left:323.5px;top:457.5px" width="23" height="23" viewBox="0 0 24 24" fill="none" stroke="#fff" stroke-width="1.2"><path d="M2.6 10.4 A9.6 9.6 0 0 1 20.8 7.4 M21.4 13.6 A9.6 9.6 0 0 1 3.2 16.6" stroke-width="1.3"/><path d="M0.6 5.6 L2.5 10.8 L7.4 8.8 M23.4 18.4 L21.5 13.2 L16.6 15.2" stroke-width="1.3"/></svg>
<svg style="left:323.5px;top:493.5px" width="23" height="23" viewBox="0 0 24 24" fill="none" stroke="#fff" stroke-width="1.2"><path d="M12 1.4 V22.6 M8.6 5 L12 1.2 L15.4 5 M8.6 19 L12 22.8 L15.4 19" stroke-width="1.4"/><rect x="9.8" y="9.6" width="4.4" height="5.2" fill="#fff" stroke="none"/></svg>
<svg style="left:323.5px;top:529.5px" width="23" height="23" viewBox="0 0 24 24" fill="none" stroke="#fff" stroke-width="1.2"><path d="M12 0.4 L19 9 H5 Z M12 24 L19 15.6 H5 Z" fill="#fff" stroke="none"/><path d="M5 10.5 H19 M5 12.4 H19 M5 14.3 H19" stroke-width="1.1"/></svg>
<svg style="left:323.5px;top:565.5px" width="23" height="23" viewBox="0 0 24 24" fill="none" stroke="#fff" stroke-width="1.2"><path d="M8.6 3.6 A9.6 9.6 0 1 0 15 3.2" stroke-width="1.72"/><path d="M14.4 -0.6 L7.6 3.4 L14.4 7.2 Z" fill="#fff" stroke="none"/><circle cx="12" cy="12.6" r="3.4" stroke-width="1.326"/><path d="M15.40 12.60 L17.20 12.60 M14.40 15.00 L15.68 16.28 M12.00 16.00 L12.00 17.80 M9.60 15.00 L8.32 16.28 M8.60 12.60 L6.80 12.60 M9.60 10.20 L8.32 8.92 M12.00 9.20 L12.00 7.40 M14.40 10.20 L15.68 8.92 " stroke-width="1.99"/></svg>
<svg style="left:323.5px;top:601.5px" width="23" height="23" viewBox="0 0 24 24" fill="none" stroke="#fff" stroke-width="1.2"><path d="M12.2 4.2 A7.9 7.9 0 1 0 17.2 3.8" stroke-width="1.44"/><path d="M17.2 0.4 L11.2 4 L17.2 7.4 Z" fill="#fff" stroke="none"/><circle cx="15.2" cy="11.6" r="2.7" stroke-width="1.1199999999999999"/><path d="M17.90 11.60 L19.70 11.60 M17.11 13.51 L18.38 14.78 M15.20 14.30 L15.20 16.10 M13.29 13.51 L12.02 14.78 M12.50 11.60 L10.70 11.60 M13.29 9.69 L12.02 8.42 M15.20 8.90 L15.20 7.10 M17.11 9.69 L18.38 8.42 " stroke-width="1.68"/><circle cx="6.2" cy="17.6" r="3.2" fill="#fff" stroke="none"/><path d="M6.2 12.4 V13.6 M6.2 21.6 V23 M1 17.6 H2.2 M2.4 13.8 L3.4 14.8 M2.4 21.4 L3.4 20.4 M10 21.4 L9 20.4" stroke-width="1.1"/></svg>
<svg style="left:323.5px;top:637.5px" width="23" height="23" viewBox="0 0 24 24" fill="none" stroke="#fff" stroke-width="1.2"><rect x="1.6" y="1.6" width="20.8" height="20.8" fill="#fff" stroke="none"/></svg>
<svg style="left:323.5px;top:673.5px" width="23" height="23" viewBox="0 0 24 24" fill="none" stroke="#fff" stroke-width="1.2"><rect x="1.2" y="1.4" width="9.6" height="21.2" fill="#fff" stroke="none"/><rect x="13.2" y="1.4" width="9.6" height="21.2" fill="#fff" stroke="none"/></svg>
<svg style="left:323.5px;top:709.5px" width="23" height="23" viewBox="0 0 24 24" fill="none" stroke="#fff" stroke-width="1.2"><rect x="2.6" y="2.6" width="18.8" height="18.8" fill="#7ae4ef" stroke="#e4fbff" stroke-width=".9"/></svg>
<svg style="left:323.5px;top:745.5px" width="23" height="23" viewBox="0 0 24 24" fill="none" stroke="#fff" stroke-width="1.2"><rect x="2" y="1.6" width="20" height="10" stroke-width="1.1"/><rect x="2" y="14.6" width="8.6" height="7.6" stroke-width="1.1"/><rect x="13.4" y="14.6" width="8.6" height="7.6" stroke-width="1.1"/></svg>
<svg style="left:323.5px;top:781.5px" width="23" height="23" viewBox="0 0 24 24" fill="none" stroke="#fff" stroke-width="1.2"><rect x="2" y="1.4" width="9" height="21" stroke-width="1.1"/><rect x="14.4" y="1.4" width="7.6" height="8.4" stroke-width="1.1"/><rect x="14.4" y="13.6" width="7.6" height="8.8" stroke-width="1.1"/></svg>
<svg style="left:323.5px;top:817.5px" width="23" height="23" viewBox="0 0 24 24" fill="none" stroke="#fff" stroke-width="1.2"><rect x="2" y="1.4" width="4.6" height="21" stroke-width="1.1"/><rect x="9.6" y="1.4" width="4.6" height="21" stroke-width="1.1"/><rect x="17.2" y="1.4" width="4.6" height="21" stroke-width="1.1"/></svg>
<svg style="left:323.5px;top:852.5px" width="23" height="23" viewBox="0 0 24 24" fill="none" stroke="#fff" stroke-width="1.2"><rect x="2" y="1.6" width="20" height="5" stroke-width="1.1"/><rect x="2" y="9.6" width="20" height="5" stroke-width="1.1"/><path d="M2 22 V17.4 H22 V22" stroke-width="1.1"/></svg>
<div style="left:317px;top:878px;width:40px;height:2px;background:#222"></div>
<div style="left:405.4px;top:846.2px;width:25.2px;height:25.6px;border:1.8px solid #1b8cab;border-radius:6px;box-sizing:border-box"></div>
<svg style="left:406.5px;top:847.5px" width="23" height="23" viewBox="0 0 24 24" fill="none" stroke="#fff" stroke-width="1.2"><path d="M9.2 9 H14.8 V12.6 H19 L12 20.8 L5 12.6 H9.2 Z" fill="#fff" stroke="none"/><path d="M9.2 4.2 H14.8 M9.2 6.8 H14.8" stroke-width="1.3"/></svg>
<div style="left:443.4px;top:846.2px;width:25.2px;height:25.6px;border:1.8px solid #1b8cab;border-radius:6px;box-sizing:border-box"></div>
<svg style="left:444.5px;top:847.5px" width="23" height="23" viewBox="0 0 24 24" fill="none" stroke="#fff" stroke-width="1.2"><path d="M3.4 17 A8.8 8.8 0 0 1 20.6 17" stroke-width="1.5"/><path d="M12.4 15.4 L5.6 8.2" stroke-width="2.2"/><path d="M4.6 7 L9 10 L6.4 12 Z" fill="#fff" stroke="none"/><path d="M8.6 20.4 H15.4" stroke-width="2"/></svg>
<div style="left:481.4px;top:846.2px;width:25.2px;height:25.6px;border:1.8px solid #1b8cab;border-radius:6px;box-sizing:border-box"></div>
<svg style="left:482.5px;top:847.5px" width="23" height="23" viewBox="0 0 24 24" fill="none" stroke="#fff" stroke-width="1.2"><path d="M3.4 16 A8.8 8.8 0 0 1 20.6 16" stroke-width="1.5"/><path d="M11.6 14.6 L18.4 7.4" stroke-width="2.2"/><path d="M19.4 6.2 L15 9.2 L17.6 11.2 Z" fill="#fff" stroke="none"/><path d="M8.4 19.4 H15.6 M12 15.8 V23" stroke-width="2"/></svg>
<div style="left:777.8px;top:846.2px;width:25.2px;height:25.6px;border:1.8px solid #1b8cab;border-radius:6px;box-sizing:border-box"></div>
<svg style="left:780.4px;top:849.0px" width="20" height="20" viewBox="0 0 24 24" fill="none" stroke="#fff" stroke-width="1.2"><path d="M6.4 4.6 V19.4" stroke-width="1.8"/><path d="M18 4.6 V19.4 L8.6 12 Z" fill="#fff" stroke="none"/></svg>
<div style="left:815.8px;top:846.2px;width:25.2px;height:25.6px;border:1.8px solid #1b8cab;border-radius:6px;box-sizing:border-box"></div>
<svg style="left:818.4px;top:849.0px" width="20" height="20" viewBox="0 0 24 24" fill="none" stroke="#fff" stroke-width="1.2"><path d="M16.6 4.4 L7.6 12 L16.6 19.6" stroke-width="1.5"/></svg>
<div style="left:853.8px;top:846.2px;width:25.2px;height:25.6px;border:1.8px solid #1b8cab;border-radius:6px;box-sizing:border-box"></div>
<svg style="left:856.4px;top:849.0px" width="20" height="20" viewBox="0 0 24 24" fill="none" stroke="#fff" stroke-width="1.2"><path d="M7.4 3.8 V20.2 L18.8 12 Z" fill="#fff" stroke="none"/></svg>
<div style="left:891.8px;top:846.2px;width:25.2px;height:25.6px;border:1.8px solid #1b8cab;border-radius:6px;box-sizing:border-box"></div>
<svg style="left:894.4px;top:849.0px" width="20" height="20" viewBox="0 0 24 24" fill="none" stroke="#fff" stroke-width="1.2"><path d="M7.4 4.4 L16.4 12 L7.4 19.6" stroke-width="1.5"/></svg>
<div style="left:929.8px;top:846.2px;width:25.2px;height:25.6px;border:1.8px solid #1b8cab;border-radius:6px;box-sizing:border-box"></div>
<svg style="left:932.4px;top:849.0px" width="20" height="20" viewBox="0 0 24 24" fill="none" stroke="#fff" stroke-width="1.2"><path d="M17.6 4.6 V19.4" stroke-width="1.8"/><path d="M6 4.6 V19.4 L15.4 12 Z" fill="#fff" stroke="none"/></svg>
<div style="left:1112.4px;top:846.2px;width:25.2px;height:25.6px;border:1.8px solid #0f4555;border-radius:6px;box-sizing:border-box"></div>
<svg style="left:1114.0px;top:848.0px" width="22" height="22" viewBox="0 0 24 24" fill="none" stroke="#4a4a4a" stroke-width="1.2"><path d="M12 6.6 L5 12 L12 17.4 Z M19 6.6 L12 12 L19 17.4 Z" stroke-width="1.1"/></svg>
<div style="left:1149.4px;top:846.2px;width:25.2px;height:25.6px;border:1.8px solid #0f4555;border-radius:6px;box-sizing:border-box"></div>
<svg style="left:1151.0px;top:848.0px" width="22" height="22" viewBox="0 0 24 24" fill="none" stroke="#4a4a4a" stroke-width="1.2"><path d="M5 6.6 L12 12 L5 17.4 Z M12 6.6 L19 12 L12 17.4 Z" stroke-width="1.1"/></svg>
<div style="left:1188.4px;top:846.2px;width:25.2px;height:25.6px;border:1.8px solid #0f4555;border-radius:6px;box-sizing:border-box"></div>
<svg style="left:1190.0px;top:848.0px" width="22" height="22" viewBox="0 0 24 24" fill="none" stroke="#4a4a4a" stroke-width="1.2"><path d="M2.6 12 L6.6 9 V15 Z" fill="#4a4a4a" stroke="none"/><rect x="9" y="6.6" width="12" height="10.8" rx="2" stroke-width="1.3"/><path d="M15 6.6 V17.4 M9 12 H21" stroke-width="1.2"/></svg>
<div style="left:1226.4px;top:846.2px;width:25.2px;height:25.6px;border:1.8px solid #1b8cab;border-radius:6px;box-sizing:border-box"></div>
<svg style="left:1228.0px;top:848.0px" width="22" height="22" viewBox="0 0 24 24" fill="none" stroke="#fff" stroke-width="1.2"><circle cx="5.4" cy="12" r="2.5" fill="#fff" stroke="none"/><circle cx="12" cy="12" r="2.5" fill="#fff" stroke="none"/><circle cx="18.6" cy="12" r="2.5" fill="#fff" stroke="none"/></svg>
<div style="left:1264.4px;top:846.2px;width:25.2px;height:25.6px;border:1.8px solid #1b8cab;border-radius:6px;box-sizing:border-box"></div>
<svg style="left:1266.0px;top:848.0px" width="22" height="22" viewBox="0 0 24 24" fill="none" stroke="#fff" stroke-width="1.2"><path d="M21.6 12 L17.6 9 V15 Z" fill="#fff" stroke="none"/><rect x="3" y="6.4" width="12.6" height="11.2" rx="2.2" stroke-width="1.5"/><path d="M9.3 6.4 V17.6 M3 12 H15.6" stroke-width="1.3"/></svg>
<div style="left:1302.4px;top:846.2px;width:25.2px;height:25.6px;border:1.8px solid #0f4555;border-radius:6px;box-sizing:border-box"></div>
<svg style="left:1304.0px;top:848.0px" width="22" height="22" viewBox="0 0 24 24" fill="none" stroke="#4a4a4a" stroke-width="1.2"><path d="M2 12 L6 9 V15 Z" fill="#4a4a4a" stroke="none"/><circle cx="14.6" cy="8.4" r="3.4" fill="#4a4a4a" stroke="none"/><path d="M7.6 18 C7.6 14 10.6 12.8 14.6 12.8 C18.6 12.8 21.6 14 21.6 18 Z" fill="#4a4a4a" stroke="none"/></svg>
<div style="left:1340.4px;top:846.2px;width:25.2px;height:25.6px;border:1.8px solid #1b8cab;border-radius:6px;box-sizing:border-box"></div>
<svg style="left:1342.0px;top:848.0px" width="22" height="22" viewBox="0 0 24 24" fill="none" stroke="#fff" stroke-width="1.2"><path d="M22.4 11.4 L17.6 8 V14.8 Z" fill="#fff" stroke="none"/><circle cx="8.6" cy="7.8" r="3.6" fill="#fff" stroke="none"/><path d="M1.4 18 C1.4 13.8 4.6 12.6 8.6 12.6 C12.6 12.6 15.8 13.8 15.8 18 Z" fill="#fff" stroke="none"/></svg>
<svg style="left:1246px;top:95px;" width="26" height="22" viewBox="0 0 26 22"><g fill="#fff"><path d="M4.4 0.6 H6.6 V14 H10.4 L5.5 20.6 L0.6 14 H4.4 Z"/><rect x="9.6" y="1" width="15.4" height="4.2" rx="2.1"/><rect x="12.6" y="6.4" width="12.4" height="4.2" rx="2.1"/><rect x="14.6" y="11.8" width="10.4" height="4.2" rx="2.1"/><rect x="12.6" y="17.2" width="12.4" height="4.2" rx="2.1"/></g></svg>
<svg style="left:1290px;top:95px;" width="18" height="24" viewBox="0 0 17 24"><path d="M1 3.4 C1 0.6 16 0.6 16 3.4 L14 21 C13.6 23.4 3.4 23.4 3 21 Z" fill="#fff"/><ellipse cx="8.5" cy="3.5" rx="6.2" ry="1.5" fill="#028bae"/><path d="M1.6 6.4 C4 8 13 8 15.4 6.4" stroke="#028bae" stroke-width=".9" fill="none"/><circle cx="8.5" cy="14.4" r="3.6" fill="none" stroke="#028bae" stroke-width="1.6" stroke-dasharray="3.2 1.6"/><path d="M3.6 21.4 C5 22.4 12 22.4 13.4 21.4" stroke="#028bae" stroke-width=".7" fill="none"/></svg>
<svg style="left:1331px;top:95px;" width="18" height="23" viewBox="0 0 18 23"><g fill="#fff"><ellipse cx="9" cy="6" rx="4.6" ry="5.6"/><path d="M0.4 22.8 V17.6 C0.4 14.6 3 13.2 5.6 12.6 C7.6 14.2 10.4 14.2 12.4 12.6 C15 13.2 17.6 14.6 17.6 17.6 V22.8 Z"/></g></svg>
<div style="left:943px;top:791.8px;width:405.5px;height:61.6px;background:rgba(240,240,240,.97);border-left:4px solid #2bb39a;border-radius:3px 0 0 3px;box-sizing:border-box"></div>
<svg style="left:965.5px;top:812px;" width="22" height="22" viewBox="0 0 22 22"><circle cx="11" cy="11" r="11" fill="#2bb596"/><path d="M6 11.4 L9.6 14.8 L16 8" fill="none" stroke="#fff" stroke-width="2"/></svg>
<div class="t" style="left:1000px;top:814.5px;font-size:15px;color:#55555a;letter-spacing:0.02px">Image added to selected series successfully</div>
<svg style="left:1310.5px;top:816px;" width="14" height="14" viewBox="0 0 14 14"><path d="M1.5 1.5 L12.5 12.5 M12.5 1.5 L1.5 12.5" stroke="#444" stroke-width="1.5" fill="none"/></svg>
<div style="left:0px;top:0px;width:1380px;height:1px;background:#5a5a5a"></div>
<div style="left:0px;top:0px;width:1px;height:880px;background:#4a4a4a"></div>
<div style="left:0px;top:878px;width:1380px;height:2px;background:#55595c"></div>
<div style="left:1378.7px;top:127px;width:1.3px;height:753px;background:#4c4c4c"></div>
<div style="left:1379px;top:87px;width:1px;height:40px;background:#5a6a70"></div>
</body></html>
